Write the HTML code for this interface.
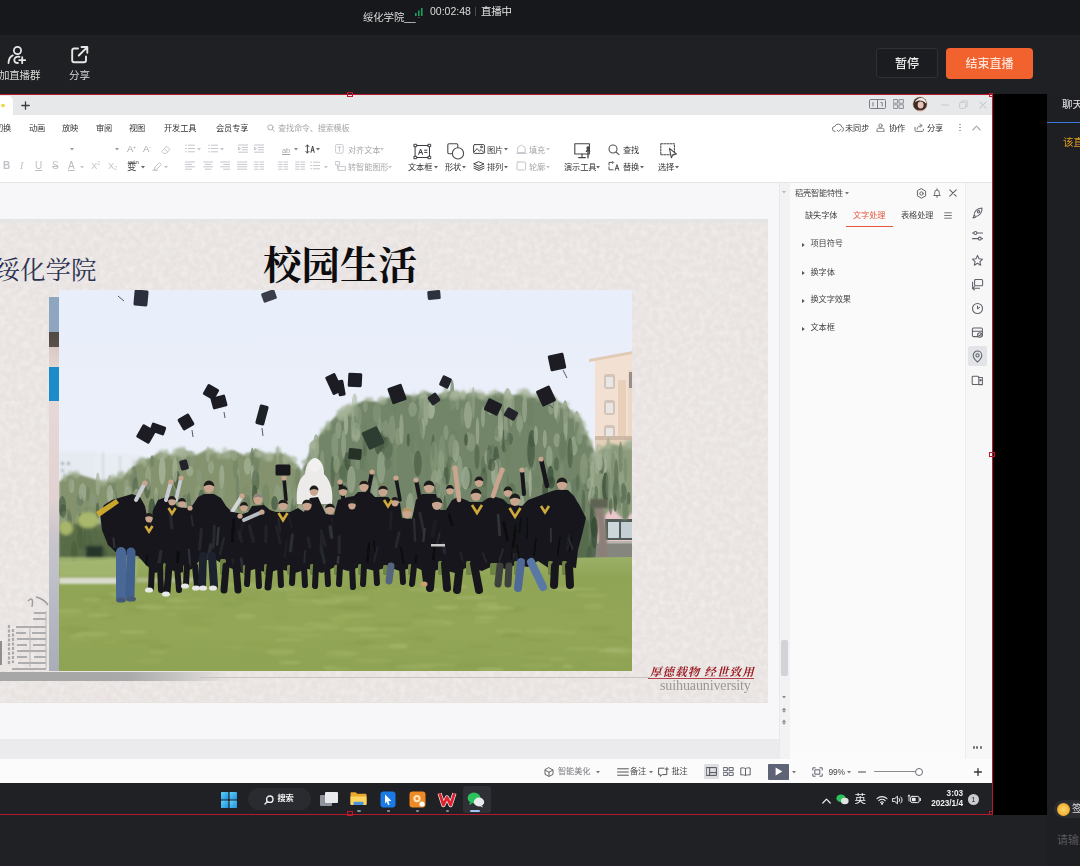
<!DOCTYPE html>
<html lang="zh-CN">
<head>
<meta charset="utf-8">
<title>直播中</title>
<style>
*{box-sizing:border-box;margin:0;padding:0}
html,body{width:1080px;height:866px;overflow:hidden;background:#1f2023;}
body{position:relative;font-family:"Liberation Sans","Noto Sans CJK SC",sans-serif;color:#e8e8e8;-webkit-font-smoothing:antialiased}
.abs{position:absolute}
.t{position:absolute;white-space:nowrap;line-height:1}
.soft{filter:blur(.45px)}
/* ===== live app chrome ===== */
#topband{left:0;top:0;width:1080px;height:35px;background:#17181b}
#toolbar{left:0;top:35px;width:1080px;height:59px;background:#1f2023}
#rightblack{left:993px;top:94px;width:54px;height:721px;background:#000}
#chat{left:1047px;top:94px;width:33px;height:772px;background:#1e1f22}
#bottomband{left:0;top:815px;width:1047px;height:51px;background:#202124}
.btn{position:absolute;top:49px;height:30px;border-radius:3px;font-size:12px;line-height:30px;text-align:center}
/* ===== shared window (page coordinates) ===== */
#win{left:0;top:0;width:992px;height:814px;overflow:hidden}
#win .t{color:#333}
#win{filter:blur(.45px)}
#winbg{left:0;top:95px;width:992px;height:720px;background:#fff}
#tabstrip{left:0;top:95px;width:992px;height:20px;background:#e7e8ea}
#work{left:0;top:183px;width:790px;height:556px;background:#f7f7f9}
#notes{left:0;top:739px;width:790px;height:20px;background:#ebebed}
#slide{left:0;top:219px;width:768px;height:484px;background:#e8e3e1;overflow:hidden}
#side{left:790px;top:183px;width:175px;height:576px;background:#fafafb}
#iconstrip{left:965px;top:183px;width:27px;height:576px;background:#f7f7f8;border-left:1px solid #ececee}
#status{left:0;top:759px;width:992px;height:24px;background:#fbfbfc}
#taskbar{left:0;top:783px;width:992px;height:31px;background:#202125}
.redh{position:absolute;height:1px;background:#b51a2c}
.redv{position:absolute;width:1px;background:#b51a2c}
.hd{width:6px;height:5px;border:1px solid #c4162b;background:transparent}
.r8{font-size:8.2px;color:#333;letter-spacing:-.1px}
#win .g8{font-size:8.2px;color:#a8a8ac;letter-spacing:-.1px}
.ic{position:absolute;overflow:visible}

</style>
</head>
<body>
<div id="topband" class="abs"></div>
<div id="toolbar" class="abs"></div>
<div id="bottomband" class="abs"></div>
<div id="rightblack" class="abs"></div>
<div id="chat" class="abs"></div>

<div id="win" class="abs">
  <div id="winbg" class="abs"></div>
  <div id="tabstrip" class="abs"></div>
  <div class="abs" style="left:0;top:96px;width:13px;height:19px;background:#fff;border-radius:0 5px 0 0"></div>
<div class="abs" style="left:1px;top:103.5px;width:3.5px;height:3.5px;border-radius:50%;background:#e9d84a"></div>
<svg class="ic soft" style="left:20.5px;top:100.5px" width="9" height="9" viewBox="0 0 9 9" fill="none" stroke="#3a3a3c" stroke-width="1.3" stroke-linecap="round" stroke-linejoin="round" ><path d="M4.5 .8v7.4M.8 4.5h7.4"/></svg>
<svg class="ic soft" style="left:869px;top:99px" width="17" height="10" viewBox="0 0 17 10" fill="none" stroke="#7a7d86" stroke-width="1" stroke-linecap="round" stroke-linejoin="round" ><rect x=".5" y=".5" width="16" height="9" rx="1"/><path d="M8.5 1v8M4 3.5v3.5M12 3.5h1.2v3.5"/></svg>
<svg class="ic soft" style="left:893px;top:99px" width="11" height="10" viewBox="0 0 11 10" fill="none" stroke="#8a8d96" stroke-width="1" stroke-linecap="round" stroke-linejoin="round" ><rect x=".6" y=".6" width="4" height="3.6"/><rect x="6.4" y=".6" width="4" height="3.6"/><rect x=".6" y="5.8" width="4" height="3.6"/><rect x="6.4" y="5.8" width="4" height="3.6"/></svg>
<svg class="ic soft" style="left:912.3px;top:95.5px" width="16" height="16" viewBox="0 0 16 16"><circle cx="8" cy="8" r="7.6" fill="#d8c3a8"/><circle cx="8" cy="8" r="6.8" fill="#3a2b28"/><path d="M3 6.2C4 2.6 8 1 11.4 2.4c2 1 3 3 2.6 5-2-2.4-5-3.4-8.4-2.6z" fill="#f3eeee"/><ellipse cx="8.6" cy="9" rx="3" ry="3.4" fill="#e9c3b4"/><path d="M6 13.4q2.6 1.4 5.2 0l-.6 1.4q-2 .8-4 0z" fill="#c98e8a"/></svg>
<svg class="ic soft" style="left:941px;top:104px" width="8" height="2" viewBox="0 0 8 2" fill="none" stroke="#c9cacf" stroke-width="1.1" stroke-linecap="round" stroke-linejoin="round" ><path d="M.5 1h7"/></svg>
<svg class="ic soft" style="left:959px;top:100px" width="9" height="9" viewBox="0 0 9 9" fill="none" stroke="#c9cacf" stroke-width="1" stroke-linecap="round" stroke-linejoin="round" ><rect x=".6" y="2.4" width="6" height="6" rx="1"/><path d="M2.6 2.2V.9h5.6v5.6H7"/></svg>
<svg class="ic soft" style="left:979px;top:100.5px" width="8" height="8" viewBox="0 0 8 8" fill="none" stroke="#c9cacf" stroke-width="1.1" stroke-linecap="round" stroke-linejoin="round" ><path d="M.8 .8l6.4 6.4M7.2 .8.8 7.2"/></svg>
<div class="t soft r8" style="left:-5px;top:125.0px;">切换</div>
<div class="t soft r8" style="left:29px;top:125.0px;">动画</div>
<div class="t soft r8" style="left:62px;top:125.0px;">放映</div>
<div class="t soft r8" style="left:96px;top:125.0px;">审阅</div>
<div class="t soft r8" style="left:129px;top:125.0px;">视图</div>
<div class="t soft r8" style="left:164px;top:125.0px;">开发工具</div>
<div class="t soft r8" style="left:216px;top:125.0px;">会员专享</div>
<svg class="ic soft" style="left:267px;top:123.5px" width="8" height="8" viewBox="0 0 8 8" fill="none" stroke="#b0b0b4" stroke-width="1" stroke-linecap="round" stroke-linejoin="round" ><circle cx="3.4" cy="3.4" r="2.6"/><path d="M5.4 5.4 7.4 7.4"/></svg>
<div class="t soft g8" style="left:278px;top:125.0px;letter-spacing:-.25px">查找命令、搜索模板</div>
<svg class="ic soft" style="left:832px;top:122.5px" width="12" height="10" viewBox="0 0 12 10" fill="none" stroke="#777" stroke-width="1" stroke-linecap="round" stroke-linejoin="round" ><path d="M3.2 8.5a2.6 2.6 0 0 1-.3-5.2 3.6 3.6 0 0 1 6.9.9 2.2 2.2 0 0 1 .2 4.3"/><path d="M5.2 7.2l1.4 1.4 2.4-2.4"/></svg>
<div class="t soft r8" style="left:845px;top:125.0px;">未同步</div>
<svg class="ic soft" style="left:876px;top:123px" width="9" height="9" viewBox="0 0 9 9" fill="none" stroke="#777" stroke-width="1" stroke-linecap="round" stroke-linejoin="round" ><circle cx="4.5" cy="2.6" r="1.7"/><path d="M1 8.4V6.6c0-.8.7-1.4 1.5-1.4h4c.8 0 1.5.6 1.5 1.4v1.8z"/></svg>
<div class="t soft r8" style="left:889px;top:125.0px;">协作</div>
<svg class="ic soft" style="left:914px;top:123px" width="11" height="9" viewBox="0 0 11 9" fill="none" stroke="#777" stroke-width="1" stroke-linecap="round" stroke-linejoin="round" ><path d="M1 4.2v3.2c0 .6.5 1 1 1h6.4c.6 0 1-.4 1-1V6.2"/><path d="M3 6.2c.4-2.4 2-3.6 4.6-3.6M6.2 .8l1.8 1.8-1.8 1.8"/></svg>
<div class="t soft r8" style="left:927px;top:125.0px;">分享</div>
<div class="abs" style="left:959.3px;top:123.6px;width:1.4px;height:1.4px;border-radius:50%;background:#9a9aa0"></div>
<div class="abs" style="left:959.3px;top:126.8px;width:1.4px;height:1.4px;border-radius:50%;background:#9a9aa0"></div>
<div class="abs" style="left:959.3px;top:130.0px;width:1.4px;height:1.4px;border-radius:50%;background:#9a9aa0"></div>
<svg class="ic soft" style="left:972px;top:125px" width="9" height="6" viewBox="0 0 9 6" fill="none" stroke="#aaaab0" stroke-width="1.1" stroke-linecap="round" stroke-linejoin="round" ><path d="M.8 5 4.5 1.2 8.2 5"/></svg>
<svg class="ic" style="left:70px;top:148.4px" width="4" height="3" viewBox="0 0 4 3"><path d="M0 0h4L2 2.6z" fill="#999"/></svg>
<svg class="ic" style="left:115px;top:148.4px" width="4" height="3" viewBox="0 0 4 3"><path d="M0 0h4L2 2.6z" fill="#999"/></svg>
<div class="t soft g8" style="left:127px;top:146.5px;font-size:9.5px;top:143.5px">A<sup style="font-size:5px;vertical-align:3px">+</sup></div>
<div class="t soft g8" style="left:143px;top:146.5px;font-size:9.5px;top:143.5px">A<sup style="font-size:5px;vertical-align:3px">-</sup></div>
<svg class="ic soft" style="left:161px;top:144.5px" width="10" height="9" viewBox="0 0 10 9" fill="none" stroke="#c4c6cc" stroke-width="1" stroke-linecap="round" stroke-linejoin="round" ><path d="M1 6.2 5.6 1.2 9 4.4 5.2 8.4H3z"/><path d="M3.4 3.8 6.8 7"/></svg>
<svg class="ic soft" style="left:185px;top:144.4px" width="10.4" height="9.4" viewBox="0 0 10.4 9.4" fill="none" stroke="#c4c6cc" stroke-width="1" stroke-linecap="round" stroke-linejoin="round" ><path d="M3.4 1.2h6.2M3.4 4.5h6.2M3.4 7.8h6.2"/><path d="M.6 1.2h.9M.6 4.5h.9M.6 7.8h.9"/></svg>
<svg class="ic" style="left:197px;top:148.4px" width="4" height="3" viewBox="0 0 4 3"><path d="M0 0h4L2 2.6z" fill="#c4c6cc"/></svg>
<svg class="ic soft" style="left:208px;top:144.4px" width="10.4" height="9.4" viewBox="0 0 10.4 9.4" fill="none" stroke="#c4c6cc" stroke-width="1" stroke-linecap="round" stroke-linejoin="round" ><path d="M3.4 1.2h6.2M3.4 4.5h6.2M3.4 7.8h6.2"/><path d="M.6 1.2h.9M.6 4.5h.9M.6 7.8h.9"/></svg>
<svg class="ic" style="left:220px;top:148.4px" width="4" height="3" viewBox="0 0 4 3"><path d="M0 0h4L2 2.6z" fill="#c4c6cc"/></svg>
<svg class="ic soft" style="left:238px;top:144.4px" width="10.4" height="9.4" viewBox="0 0 10.4 9.4" fill="none" stroke="#c4c6cc" stroke-width="1" stroke-linecap="round" stroke-linejoin="round" ><path d="M.6 1h9M4.2 3.4h5.4M4.2 5.8h5.4M.6 8.2h9"/><path d="M.8 3.4l1.8 1.2-1.8 1.2z"/></svg>
<svg class="ic soft" style="left:254px;top:144.4px" width="10.4" height="9.4" viewBox="0 0 10.4 9.4" fill="none" stroke="#c4c6cc" stroke-width="1" stroke-linecap="round" stroke-linejoin="round" ><path d="M.6 1h9M4.2 3.4h5.4M4.2 5.8h5.4M.6 8.2h9"/><path d="M.8 3.4l1.8 1.2-1.8 1.2z"/></svg>
<div class="t soft g8" style="left:282px;top:146.5px;font-size:7.5px;text-decoration:underline">ab</div>
<svg class="ic" style="left:294px;top:148.4px" width="4" height="3" viewBox="0 0 4 3"><path d="M0 0h4L2 2.6z" fill="#888"/></svg>
<svg class="ic soft" style="left:305px;top:144px" width="10" height="10" viewBox="0 0 10 10" fill="none" stroke="#444" stroke-width="1" stroke-linecap="round" stroke-linejoin="round" ><path d="M2.4 1v8M.8 2.6 2.4 1 4 2.6M.8 7.4 2.4 9 4 7.4"/><path d="M6 8.4 7.6 2l1.6 6.4M6.6 6.2h2"/></svg>
<svg class="ic" style="left:316px;top:148.4px" width="4" height="3" viewBox="0 0 4 3"><path d="M0 0h4L2 2.6z" fill="#666"/></svg>
<svg class="ic soft" style="left:335px;top:144px" width="9" height="10" viewBox="0 0 9 10" fill="none" stroke="#c4c6cc" stroke-width="1" stroke-linecap="round" stroke-linejoin="round" ><rect x=".6" y=".6" width="7.6" height="8.6" rx="1" stroke-dasharray="1.6 1"/><path d="M2.8 3.2h3.2M4.4 3.2v4"/></svg>
<div class="t soft g8" style="left:348px;top:146.5px;">对齐文本</div>
<svg class="ic" style="left:380px;top:148.4px" width="4" height="3" viewBox="0 0 4 3"><path d="M0 0h4L2 2.6z" fill="#c4c6cc"/></svg>
<div class="t soft g8" style="left:3px;top:164.4px;font-size:10px;top:161px;font-weight:700;color:#bfc1c7">B</div>
<div class="t soft g8" style="left:20px;top:164.4px;font-size:10px;top:161px;color:#bfc1c7;font-family:'Liberation Serif',serif"><i>I</i></div>
<div class="t soft g8" style="left:35px;top:164.4px;font-size:10px;top:161px;color:#bfc1c7"><u>U</u></div>
<div class="t soft g8" style="left:52px;top:164.4px;font-size:10px;top:161px;color:#bfc1c7"><s>S</s></div>
<div class="t soft g8" style="left:68px;top:164.4px;font-size:10px;top:161px;color:#b7b9bf"><u>A</u></div>
<svg class="ic" style="left:80px;top:165.7px" width="4" height="3" viewBox="0 0 4 3"><path d="M0 0h4L2 2.6z" fill="#c4c6cc"/></svg>
<div class="t soft g8" style="left:91px;top:164.4px;font-size:9.5px;top:161px;color:#c4c6cc">X<sup style="font-size:5px;vertical-align:4px">2</sup></div>
<div class="t soft g8" style="left:108px;top:164.4px;font-size:9.5px;top:161px;color:#c4c6cc">X<sub style="font-size:5px;vertical-align:-1px">2</sub></div>
<div class="t soft r8" style="left:127px;top:164.4px;font-size:9.5px;top:161.5px;color:#444"><span style="font-size:6px;position:absolute;top:-3px;left:1px">wén</span>变</div>
<svg class="ic" style="left:141px;top:165.7px" width="4" height="3" viewBox="0 0 4 3"><path d="M0 0h4L2 2.6z" fill="#666"/></svg>
<svg class="ic soft" style="left:152px;top:161px" width="11" height="10" viewBox="0 0 11 10" fill="none" stroke="#c4c6cc" stroke-width="1" stroke-linecap="round" stroke-linejoin="round" ><path d="M2 8.6 3 6l4.4-4.6 2 2L5 8z"/><path d="M.8 9.4h4.6"/></svg>
<svg class="ic" style="left:164px;top:165.7px" width="4" height="3" viewBox="0 0 4 3"><path d="M0 0h4L2 2.6z" fill="#c4c6cc"/></svg>
<svg class="ic soft" style="left:185px;top:161.4px" width="10.4" height="9.4" viewBox="0 0 10.4 9.4" fill="none" stroke="#c4c6cc" stroke-width="1" stroke-linecap="round" stroke-linejoin="round" ><path d="M.6 1h9M.6 3.4h6M.6 5.8h9M.6 8.2h6"/></svg>
<svg class="ic soft" style="left:203px;top:161.4px" width="10.4" height="9.4" viewBox="0 0 10.4 9.4" fill="none" stroke="#c4c6cc" stroke-width="1" stroke-linecap="round" stroke-linejoin="round" ><path d="M.6 1h9M2.2 3.4h5.8M.6 5.8h9M2.2 8.2h5.8"/></svg>
<svg class="ic soft" style="left:220px;top:161.4px" width="10.4" height="9.4" viewBox="0 0 10.4 9.4" fill="none" stroke="#c4c6cc" stroke-width="1" stroke-linecap="round" stroke-linejoin="round" ><path d="M.6 1h9M3.6 3.4h6M.6 5.8h9M3.6 8.2h6"/></svg>
<svg class="ic soft" style="left:237px;top:161.4px" width="10.4" height="9.4" viewBox="0 0 10.4 9.4" fill="none" stroke="#c4c6cc" stroke-width="1" stroke-linecap="round" stroke-linejoin="round" ><path d="M.6 1h9M.6 3.4h9M.6 5.8h9M.6 8.2h9"/></svg>
<svg class="ic soft" style="left:254px;top:161.4px" width="10.4" height="9.4" viewBox="0 0 10.4 9.4" fill="none" stroke="#c4c6cc" stroke-width="1" stroke-linecap="round" stroke-linejoin="round" ><path d="M.6 1h3.4M6 1h3.6M.6 3.4h3.4M6 3.4h3.6M.6 5.8h3.4M6 5.8h3.6M.6 8.2h3.4M6 8.2h3.6"/></svg>
<svg class="ic soft" style="left:278px;top:161.4px" width="10.4" height="9.4" viewBox="0 0 10.4 9.4" fill="none" stroke="#c4c6cc" stroke-width="1" stroke-linecap="round" stroke-linejoin="round" ><path d="M.6 1h3.4M6 1h3.6M.6 3.4h3.4M6 3.4h3.6M.6 5.8h3.4M6 5.8h3.6M.6 8.2h3.4M6 8.2h3.6"/></svg>
<svg class="ic soft" style="left:295px;top:161.4px" width="10.4" height="9.4" viewBox="0 0 10.4 9.4" fill="none" stroke="#c4c6cc" stroke-width="1" stroke-linecap="round" stroke-linejoin="round" ><path d="M.6 1h3.4M6 1h3.6M.6 3.4h3.4M6 3.4h3.6M.6 5.8h3.4M6 5.8h3.6M.6 8.2h3.4M6 8.2h3.6"/></svg>
<svg class="ic soft" style="left:310px;top:161.4px" width="10.4" height="9.4" viewBox="0 0 10.4 9.4" fill="none" stroke="#c4c6cc" stroke-width="1" stroke-linecap="round" stroke-linejoin="round" ><path d="M3.4 1.2h6.2M3.4 4.5h6.2M3.4 7.8h6.2"/><path d="M.6 1.2h.9M.6 4.5h.9M.6 7.8h.9"/></svg>
<svg class="ic" style="left:324px;top:165.7px" width="4" height="3" viewBox="0 0 4 3"><path d="M0 0h4L2 2.6z" fill="#c4c6cc"/></svg>
<svg class="ic soft" style="left:335px;top:161px" width="11" height="10" viewBox="0 0 11 10" fill="none" stroke="#c4c6cc" stroke-width="1" stroke-linecap="round" stroke-linejoin="round" ><rect x=".6" y=".6" width="4" height="3.4"/><rect x="3.4" y="5.6" width="7" height="3.8"/><path d="M2.6 4v3.4h.8"/></svg>
<div class="t soft g8" style="left:348px;top:164.4px;">转智能图形</div>
<svg class="ic" style="left:388px;top:165.7px" width="4" height="3" viewBox="0 0 4 3"><path d="M0 0h4L2 2.6z" fill="#c4c6cc"/></svg>
<svg class="ic soft" style="left:413.6px;top:143.8px" width="17" height="15" viewBox="0 0 17 15" fill="none" stroke="#3c3c40" stroke-width="1" stroke-linecap="round" stroke-linejoin="round" ><rect x="1.5" y="1.5" width="14" height="12"/><rect x=".3" y=".3" width="2.4" height="2.4" fill="#fff"/><rect x="14.3" y=".3" width="2.4" height="2.4" fill="#fff"/><rect x=".3" y="12.3" width="2.4" height="2.4" fill="#fff"/><rect x="14.3" y="12.3" width="2.4" height="2.4" fill="#fff"/><path d="M4.6 10.4 6.6 5l2 5.4M5.3 8.6h2.6M10.6 6.2h2.4M10.6 8.4h2.4"/></svg>
<div class="t soft r8" style="left:408px;top:164.4px;">文本框</div>
<svg class="ic" style="left:433.5px;top:165.7px" width="4" height="3" viewBox="0 0 4 3"><path d="M0 0h4L2 2.6z" fill="#666"/></svg>
<svg class="ic soft" style="left:447px;top:143px" width="18" height="17" viewBox="0 0 18 17" fill="none" stroke="#4a4a4e" stroke-width="1.1" stroke-linecap="round" stroke-linejoin="round" ><rect x=".8" y=".8" width="10" height="10" rx="1.2"/><circle cx="11" cy="10.4" r="5.6" fill="#fff"/></svg>
<div class="t soft r8" style="left:445px;top:164.4px;">形状</div>
<svg class="ic" style="left:461.5px;top:165.7px" width="4" height="3" viewBox="0 0 4 3"><path d="M0 0h4L2 2.6z" fill="#666"/></svg>
<svg class="ic soft" style="left:473px;top:144px" width="12" height="10" viewBox="0 0 12 10" fill="none" stroke="#444" stroke-width="1" stroke-linecap="round" stroke-linejoin="round" ><rect x=".6" y=".6" width="10.8" height="8.8" rx="1"/><path d="M1 8 4 4.6l2.4 2.6L8 5.6 11 8.6"/><circle cx="8.4" cy="3" r=".9"/></svg>
<div class="t soft r8" style="left:487px;top:146.5px;">图片</div>
<svg class="ic" style="left:504px;top:148.4px" width="4" height="3" viewBox="0 0 4 3"><path d="M0 0h4L2 2.6z" fill="#666"/></svg>
<svg class="ic soft" style="left:473px;top:161px" width="12" height="10" viewBox="0 0 12 10" fill="none" stroke="#444" stroke-width="1" stroke-linecap="round" stroke-linejoin="round" ><path d="M6 .8 11 3 6 5.2 1 3z"/><path d="M1 5.2 6 7.4l5-2.2M1 7.2 6 9.4l5-2.2"/></svg>
<div class="t soft r8" style="left:487px;top:164.4px;">排列</div>
<svg class="ic" style="left:504px;top:165.7px" width="4" height="3" viewBox="0 0 4 3"><path d="M0 0h4L2 2.6z" fill="#666"/></svg>
<svg class="ic soft" style="left:516px;top:144px" width="11" height="10" viewBox="0 0 11 10" fill="none" stroke="#c4c6cc" stroke-width="1" stroke-linecap="round" stroke-linejoin="round" ><path d="M1.6 8.2V3.6L5.4 1l3.8 2.6v4.6z"/><path d="M.6 9.4h9.8"/></svg>
<div class="t soft g8" style="left:529px;top:146.5px;">填充</div>
<svg class="ic" style="left:546px;top:148.4px" width="4" height="3" viewBox="0 0 4 3"><path d="M0 0h4L2 2.6z" fill="#c4c6cc"/></svg>
<svg class="ic soft" style="left:516px;top:161px" width="11" height="10" viewBox="0 0 11 10" fill="none" stroke="#c4c6cc" stroke-width="1" stroke-linecap="round" stroke-linejoin="round" ><rect x="1" y="1" width="8.6" height="8" rx="1"/></svg>
<div class="t soft g8" style="left:529px;top:164.4px;">轮廓</div>
<svg class="ic" style="left:546px;top:165.7px" width="4" height="3" viewBox="0 0 4 3"><path d="M0 0h4L2 2.6z" fill="#c4c6cc"/></svg>
<svg class="ic soft" style="left:574px;top:143px" width="19" height="16" viewBox="0 0 19 16" fill="none" stroke="#444" stroke-width="1.1" stroke-linecap="round" stroke-linejoin="round" ><rect x=".8" y=".8" width="14.6" height="10.2"/><path d="M8 11v3M4.6 14.6h6.8"/><path d="M14 14.8V6.4M14 6.4l-1.6 2M14 6.4l1.6 2" stroke-width="1.3"/><circle cx="14" cy="5" r="1.1" fill="#444"/></svg>
<div class="t soft r8" style="left:564px;top:164.4px;">演示工具</div>
<svg class="ic" style="left:596px;top:165.7px" width="4" height="3" viewBox="0 0 4 3"><path d="M0 0h4L2 2.6z" fill="#666"/></svg>
<svg class="ic soft" style="left:608px;top:143.5px" width="12" height="11" viewBox="0 0 12 11" fill="none" stroke="#555" stroke-width="1.1" stroke-linecap="round" stroke-linejoin="round" ><circle cx="5" cy="5" r="4"/><path d="M8 8 11 10.6"/></svg>
<div class="t soft r8" style="left:623px;top:146.5px;">查找</div>
<svg class="ic soft" style="left:608px;top:161px" width="12" height="10" viewBox="0 0 12 10" fill="none" stroke="#555" stroke-width="1" stroke-linecap="round" stroke-linejoin="round" ><path d="M1 4V1.4h3.4M1 6v2.8h4"/><path d="M7.2 9.2 9 3.6l1.8 5.6M7.8 7.4h2.4"/><path d="M4.6 .4 5.6 1.4 4.6 2.4"/></svg>
<div class="t soft r8" style="left:623px;top:164.4px;">替换</div>
<svg class="ic" style="left:640px;top:165.7px" width="4" height="3" viewBox="0 0 4 3"><path d="M0 0h4L2 2.6z" fill="#666"/></svg>
<svg class="ic soft" style="left:660px;top:143px" width="18" height="16" viewBox="0 0 18 16" fill="none" stroke="#4a4a4e" stroke-width="1.1" stroke-linecap="round" stroke-linejoin="round" ><rect x=".8" y=".8" width="13.6" height="11" stroke-dasharray="1.8 1.2"/><path d="M9.4 5.4 16.4 11l-3.4.6-1.6 3.2z" fill="#fff"/></svg>
<div class="t soft r8" style="left:658px;top:164.4px;">选择</div>
<svg class="ic" style="left:675px;top:165.7px" width="4" height="3" viewBox="0 0 4 3"><path d="M0 0h4L2 2.6z" fill="#666"/></svg>
<div class="abs" style="left:0;top:182px;width:992px;height:1px;background:#e6e6e9"></div>
  <div id="work" class="abs"></div>
  <div id="notes" class="abs"></div>
  <div id="slide" class="abs"><svg class="abs" style="left:0;top:0" width="768" height="483" viewBox="0 0 768 483"><defs><filter id="paper" x="0" y="0" width="100%" height="100%"><feTurbulence type="fractalNoise" baseFrequency=".17" numOctaves="2" seed="3" result="n"/><feColorMatrix in="n" type="matrix" values="0 0 0 0 .955  0 0 0 0 .932  0 0 0 0 .928  0 0 0 1.6 -.55"/></filter><linearGradient id="sfade" x1="0" y1="0" x2="0" y2="1"><stop offset="0" stop-color="#e2e4e6"/><stop offset="1" stop-color="#e2e4e6" stop-opacity="0"/></linearGradient></defs><rect width="768" height="483" filter="url(#paper)" opacity=".55"/><rect width="768" height="5" fill="url(#sfade)"/></svg>
<div class="t" style="left:-5.5px;top:38.5px;font-family:'Liberation Serif','Noto Serif CJK SC',serif;font-size:25.5px;color:#2c3352;letter-spacing:0px">绥化学院</div>
<div class="t" style="left:263px;top:28px;font-family:'Liberation Serif','Noto Serif CJK SC',serif;font-weight:700;font-size:38.5px;color:#0d0d0f;letter-spacing:0px">校园生活</div>
<!-- left colour strip -->
<div class="abs" style="left:49px;top:78px;width:10px;height:374px;background:linear-gradient(#8ea6c0 0,#8ea6c0 35px,#4f4a44 35px,#5c5148 50px,#d9c9c4 50px,#e4d6d2 70px,#1b8bc9 70px,#1b8bc9 104px,#e6d8d6 104px,#e2d3d2 200px,#c9c6cc 240px,#b9bcc6 300px,#a9adb8 374px)"></div>
<svg class="abs" style="left:59px;top:71px" width="573" height="381" viewBox="0 0 573 381">
<defs>
<linearGradient id="sky" x1="0" y1="0" x2="0" y2="1"><stop offset="0" stop-color="#e8eefa"/><stop offset=".5" stop-color="#ecf0f9"/><stop offset="1" stop-color="#f1f3f8"/></linearGradient>
<linearGradient id="grass" x1="0" y1="0" x2="0" y2="1"><stop offset="0" stop-color="#9bb068"/><stop offset=".18" stop-color="#90a455"/><stop offset=".6" stop-color="#93a657"/><stop offset="1" stop-color="#8fa354"/></linearGradient>
<filter id="b1" x="-10%" y="-10%" width="120%" height="120%"><feGaussianBlur stdDeviation="1"/></filter>
<filter id="b2" x="-10%" y="-10%" width="120%" height="120%"><feGaussianBlur stdDeviation="1.8"/></filter>
<filter id="b05" x="-10%" y="-10%" width="120%" height="120%"><feGaussianBlur stdDeviation=".55"/></filter>
<filter id="b07" x="-10%" y="-10%" width="120%" height="120%"><feGaussianBlur stdDeviation=".75"/></filter>
<clipPath id="pc"><rect x="0" y="0" width="573" height="381"/></clipPath>
</defs>
<g clip-path="url(#pc)">
<rect width="573" height="381" fill="url(#sky)"/>
<g filter="url(#b1)"><rect x="0" y="162" width="38" height="36" fill="#e6eaf1"/><rect x="34" y="164" width="44" height="32" fill="#e8ecf3"/>
<rect x="2" y="172" width="3" height="3" fill="#a3aebb"/><rect x="8" y="172" width="3" height="3" fill="#a3aebb"/><rect x="2" y="179" width="3" height="3" fill="#b3bcc6"/>
<path d="M44,188v-26M61,180v-14M74,180v-10" stroke="#c2c8cf" stroke-width="1"/></g>
<g filter="url(#b05)"><polygon points="531,70 574,62 574,182 536,182 536,72" fill="#f2e1d2" />
<polygon points="530,69 574,61 574,64 530,72" fill="#e2cbb6" />
<rect x="545" y="84" width="11" height="15" rx="3" fill="#d3c3b8"/><rect x="547" y="87" width="7" height="10" fill="#e9e6e6"/>
<rect x="545" y="110" width="11" height="15" rx="3" fill="#d3c3b8"/><rect x="547" y="113" width="7" height="10" fill="#e9e6e6"/>
<rect x="545" y="135" width="11" height="15" rx="3" fill="#d3c3b8"/><rect x="547" y="138" width="7" height="10" fill="#e9e6e6"/>
<rect x="559" y="90" width="8" height="58" fill="#e8d0ba"/><rect x="569" y="80" width="5" height="70" fill="#ecd8c6"/><rect x="570" y="82" width="4" height="16" fill="#9a8f88"/>
<rect x="536" y="146" width="40" height="4" fill="#cdb9a4"/><rect x="536" y="150" width="40" height="30" fill="#e3d0b8"/></g>
<g filter="url(#b05)"><rect x="507" y="210" width="70" height="60" fill="#e9c7cb"/>
<rect x="512" y="232" width="15" height="18" fill="#56625f"/><rect x="514" y="234" width="5" height="14" fill="#d5e0e4"/><rect x="520.5" y="234" width="5" height="14" fill="#cdd9de"/>
<rect x="546" y="229" width="28" height="21" fill="#4f5b58"/><rect x="549" y="232" width="11" height="16" fill="#ccd7db"/><rect x="562" y="232" width="11" height="16" fill="#c3cfd3"/>
<rect x="507" y="253" width="70" height="15" fill="#85877f"/><rect x="507" y="251" width="70" height="2.5" fill="#b9b5ae"/></g>
<g filter="url(#b1)">
<polygon points="0,192 7,186 15,183 25,186 35,189 45,192 55,188 65,185 73,178 81,170 91,168 101,162 113,165 125,160 137,165 149,159 161,164 173,160 185,165 197,160 209,165 221,162 231,168 239,176 245,188 245,285 0,285" fill="#84936e" />
<polygon points="239,190 244,178 249,166 255,154 261,144 269,134 277,126 287,120 297,114 307,110 319,112 331,107 343,104 355,106 367,102 379,105 391,101 403,105 415,102 427,106 439,102 451,106 463,103 475,107 487,105 497,110 507,116 515,124 523,134 529,146 535,160 539,176 539,230 531,285 239,285" fill="#728568" />
<polygon points="529,180 535,166 543,158 553,154 563,156 574,152 574,222 565,230 553,218 545,226 537,210 531,202" fill="#8c9c7c" />
</g>
<g filter="url(#b07)"><ellipse cx="110.9" cy="224.9" rx="3.8" ry="9.2" fill="#8e9f80" opacity="0.78"/><ellipse cx="47.1" cy="255.1" rx="2.7" ry="10.5" fill="#5a6e52" opacity="0.44"/><ellipse cx="74.7" cy="187.5" rx="3.5" ry="11.2" fill="#6e8264" opacity="0.67"/><ellipse cx="97.3" cy="213.8" rx="3.3" ry="10.9" fill="#3a4e38" opacity="0.41"/><ellipse cx="129.4" cy="171.1" rx="2.0" ry="7.2" fill="#6e8264" opacity="0.75"/><ellipse cx="80.3" cy="230.6" rx="2.0" ry="7.1" fill="#465a42" opacity="0.62"/><ellipse cx="162.0" cy="213.9" rx="2.2" ry="14.0" fill="#8a9a7e" opacity="0.72"/><ellipse cx="77.6" cy="197.9" rx="2.2" ry="5.6" fill="#8a9a7e" opacity="0.58"/><ellipse cx="206.7" cy="206.8" rx="3.9" ry="12.6" fill="#6e8264" opacity="0.50"/><ellipse cx="226.3" cy="173.5" rx="2.4" ry="11.4" fill="#adb9a0" opacity="0.43"/><ellipse cx="154.0" cy="246.5" rx="2.2" ry="5.8" fill="#3a4e38" opacity="0.41"/><ellipse cx="100.6" cy="261.9" rx="1.8" ry="11.4" fill="#465a42" opacity="0.43"/><ellipse cx="194.7" cy="182.8" rx="2.9" ry="9.0" fill="#a0ae92" opacity="0.84"/><ellipse cx="188.0" cy="210.0" rx="2.5" ry="8.6" fill="#98a78c" opacity="0.40"/><ellipse cx="211.0" cy="267.4" rx="3.0" ry="14.0" fill="#465a42" opacity="0.49"/><ellipse cx="96.8" cy="255.1" rx="3.1" ry="5.9" fill="#5a6e52" opacity="0.50"/><ellipse cx="63.8" cy="251.4" rx="2.3" ry="7.7" fill="#465a42" opacity="0.43"/><ellipse cx="51.7" cy="241.8" rx="1.5" ry="8.3" fill="#3a4e38" opacity="0.60"/><ellipse cx="234.1" cy="220.5" rx="2.9" ry="12.8" fill="#5a6e52" opacity="0.68"/><ellipse cx="76.5" cy="198.6" rx="3.0" ry="11.5" fill="#5a6e52" opacity="0.73"/><ellipse cx="229.5" cy="189.7" rx="3.9" ry="12.9" fill="#8a9a7e" opacity="0.44"/><ellipse cx="12.5" cy="196.0" rx="2.8" ry="7.3" fill="#adb9a0" opacity="0.52"/><ellipse cx="201.2" cy="227.5" rx="2.2" ry="6.6" fill="#8a9a7e" opacity="0.46"/><ellipse cx="117.5" cy="234.0" rx="3.0" ry="5.7" fill="#98a78c" opacity="0.81"/><ellipse cx="50.6" cy="194.1" rx="2.2" ry="9.0" fill="#6e8264" opacity="0.42"/><ellipse cx="69.5" cy="229.7" rx="3.9" ry="5.8" fill="#5a6e52" opacity="0.80"/><ellipse cx="239.3" cy="239.0" rx="3.2" ry="10.3" fill="#5a6e52" opacity="0.67"/><ellipse cx="225.4" cy="216.2" rx="2.4" ry="7.8" fill="#6e8264" opacity="0.41"/><ellipse cx="155.6" cy="215.5" rx="3.3" ry="7.9" fill="#8a9a7e" opacity="0.43"/><ellipse cx="133.7" cy="242.8" rx="3.8" ry="11.6" fill="#6e8264" opacity="0.46"/><ellipse cx="235.1" cy="207.5" rx="1.7" ry="9.3" fill="#8a9a7e" opacity="0.79"/><ellipse cx="102.4" cy="248.1" rx="3.7" ry="10.2" fill="#324632" opacity="0.70"/><ellipse cx="93.1" cy="171.0" rx="1.7" ry="5.8" fill="#6e8264" opacity="0.85"/><ellipse cx="214.8" cy="241.9" rx="2.5" ry="11.6" fill="#324632" opacity="0.61"/><ellipse cx="113.4" cy="223.1" rx="2.8" ry="9.6" fill="#465a42" opacity="0.67"/><ellipse cx="117.9" cy="189.9" rx="3.2" ry="9.5" fill="#3a4e38" opacity="0.70"/><ellipse cx="119.2" cy="259.2" rx="2.4" ry="6.3" fill="#324632" opacity="0.49"/><ellipse cx="42.2" cy="262.9" rx="3.1" ry="9.0" fill="#5a6e52" opacity="0.55"/><ellipse cx="162.8" cy="187.0" rx="2.6" ry="12.3" fill="#a0ae92" opacity="0.80"/><ellipse cx="94.4" cy="227.9" rx="2.3" ry="6.2" fill="#60755a" opacity="0.56"/><ellipse cx="218.6" cy="169.8" rx="1.7" ry="13.8" fill="#a0ae92" opacity="0.45"/><ellipse cx="115.5" cy="262.3" rx="3.6" ry="8.4" fill="#324632" opacity="0.62"/><ellipse cx="77.6" cy="254.9" rx="4.0" ry="9.1" fill="#465a42" opacity="0.77"/><ellipse cx="68.6" cy="236.6" rx="3.2" ry="7.5" fill="#7c8e70" opacity="0.54"/><ellipse cx="193.3" cy="166.5" rx="1.8" ry="9.1" fill="#6e8264" opacity="0.75"/><ellipse cx="65.7" cy="251.8" rx="3.5" ry="13.9" fill="#465a42" opacity="0.60"/><ellipse cx="154.1" cy="233.5" rx="3.5" ry="13.6" fill="#98a78c" opacity="0.49"/><ellipse cx="116.5" cy="185.0" rx="1.5" ry="9.2" fill="#6e8264" opacity="0.48"/><ellipse cx="67.2" cy="215.1" rx="3.2" ry="9.7" fill="#3a4e38" opacity="0.85"/><ellipse cx="39.7" cy="258.4" rx="3.2" ry="7.0" fill="#60755a" opacity="0.82"/><ellipse cx="176.5" cy="178.2" rx="2.6" ry="10.6" fill="#6e8264" opacity="0.57"/><ellipse cx="139.2" cy="257.6" rx="3.5" ry="13.5" fill="#60755a" opacity="0.55"/><ellipse cx="239.7" cy="189.3" rx="3.7" ry="12.2" fill="#6e8264" opacity="0.50"/><ellipse cx="219.7" cy="268.0" rx="3.9" ry="9.8" fill="#3a4e38" opacity="0.52"/><ellipse cx="175.5" cy="165.7" rx="2.8" ry="5.3" fill="#98a78c" opacity="0.65"/><ellipse cx="187.7" cy="217.1" rx="1.6" ry="12.3" fill="#8a9a7e" opacity="0.59"/><ellipse cx="9.5" cy="231.7" rx="3.2" ry="13.2" fill="#60755a" opacity="0.47"/><ellipse cx="126.5" cy="240.6" rx="3.6" ry="11.2" fill="#60755a" opacity="0.66"/><ellipse cx="168.4" cy="244.5" rx="2.6" ry="10.0" fill="#6e8264" opacity="0.65"/><ellipse cx="40.9" cy="233.0" rx="3.8" ry="7.3" fill="#a4b298" opacity="0.83"/><ellipse cx="212.4" cy="229.8" rx="2.3" ry="6.3" fill="#8e9f80" opacity="0.64"/><ellipse cx="140.2" cy="187.2" rx="2.8" ry="9.5" fill="#8a9a7e" opacity="0.57"/><ellipse cx="131.8" cy="170.4" rx="3.8" ry="9.9" fill="#8a9a7e" opacity="0.45"/><ellipse cx="23.7" cy="202.2" rx="3.8" ry="9.1" fill="#adb9a0" opacity="0.52"/><ellipse cx="116.0" cy="179.9" rx="2.6" ry="12.3" fill="#adb9a0" opacity="0.64"/><ellipse cx="27.4" cy="223.4" rx="1.6" ry="7.3" fill="#6e8264" opacity="0.42"/><ellipse cx="38.8" cy="194.0" rx="2.2" ry="11.5" fill="#a0ae92" opacity="0.68"/><ellipse cx="26.5" cy="248.3" rx="1.8" ry="9.6" fill="#3a4e38" opacity="0.72"/><ellipse cx="171.4" cy="257.1" rx="1.6" ry="10.7" fill="#324632" opacity="0.68"/><ellipse cx="131.8" cy="255.8" rx="2.8" ry="7.0" fill="#5a6e52" opacity="0.78"/><ellipse cx="149.6" cy="254.6" rx="2.1" ry="11.7" fill="#3a4e38" opacity="0.81"/><ellipse cx="77.8" cy="205.8" rx="3.8" ry="7.0" fill="#98a78c" opacity="0.80"/><ellipse cx="33.5" cy="210.3" rx="3.3" ry="7.3" fill="#8a9a7e" opacity="0.60"/><ellipse cx="229.7" cy="224.4" rx="3.3" ry="6.8" fill="#6e8264" opacity="0.44"/><ellipse cx="139.5" cy="203.7" rx="3.6" ry="8.3" fill="#8e9f80" opacity="0.69"/><ellipse cx="84.5" cy="269.9" rx="3.6" ry="12.2" fill="#60755a" opacity="0.45"/><ellipse cx="10.1" cy="233.2" rx="2.8" ry="10.1" fill="#5a6e52" opacity="0.49"/><ellipse cx="28.9" cy="203.9" rx="1.9" ry="7.5" fill="#6e8264" opacity="0.66"/><ellipse cx="33.7" cy="245.0" rx="1.7" ry="5.9" fill="#a4b298" opacity="0.61"/><ellipse cx="126.2" cy="209.3" rx="3.0" ry="5.1" fill="#6e8264" opacity="0.78"/><ellipse cx="45.0" cy="229.0" rx="3.3" ry="8.6" fill="#98a78c" opacity="0.67"/><ellipse cx="24.0" cy="253.1" rx="2.3" ry="5.8" fill="#6e8264" opacity="0.79"/><ellipse cx="221.8" cy="263.7" rx="2.9" ry="6.7" fill="#324632" opacity="0.84"/><ellipse cx="196.6" cy="190.8" rx="3.8" ry="11.7" fill="#5a6e52" opacity="0.77"/><ellipse cx="99.6" cy="259.2" rx="3.7" ry="11.3" fill="#60755a" opacity="0.74"/><ellipse cx="99.6" cy="241.1" rx="1.7" ry="8.1" fill="#60755a" opacity="0.45"/><ellipse cx="216.8" cy="269.0" rx="3.8" ry="5.4" fill="#3a4e38" opacity="0.83"/><ellipse cx="162.9" cy="201.4" rx="3.1" ry="10.1" fill="#8e9f80" opacity="0.43"/><ellipse cx="126.1" cy="216.5" rx="2.0" ry="6.1" fill="#a4b298" opacity="0.84"/><ellipse cx="6.5" cy="239.0" rx="3.3" ry="7.3" fill="#a4b298" opacity="0.63"/><ellipse cx="186.0" cy="234.0" rx="1.5" ry="7.3" fill="#465a42" opacity="0.81"/><ellipse cx="134.7" cy="219.3" rx="3.9" ry="10.1" fill="#8a9a7e" opacity="0.69"/><ellipse cx="197.7" cy="171.4" rx="3.0" ry="11.8" fill="#6e8264" opacity="0.57"/><ellipse cx="229.1" cy="208.5" rx="3.9" ry="12.7" fill="#8e9f80" opacity="0.68"/><ellipse cx="15.2" cy="265.4" rx="2.6" ry="9.7" fill="#324632" opacity="0.54"/><ellipse cx="129.9" cy="215.8" rx="2.2" ry="13.4" fill="#465a42" opacity="0.41"/><ellipse cx="188.7" cy="227.1" rx="3.1" ry="8.7" fill="#a4b298" opacity="0.42"/><ellipse cx="77.6" cy="213.6" rx="3.0" ry="11.5" fill="#7c8e70" opacity="0.43"/><ellipse cx="221.0" cy="210.1" rx="2.7" ry="13.8" fill="#98a78c" opacity="0.42"/><ellipse cx="24.9" cy="254.6" rx="3.8" ry="6.3" fill="#5a6e52" opacity="0.67"/><ellipse cx="29.0" cy="240.0" rx="2.6" ry="6.8" fill="#6e8264" opacity="0.56"/><ellipse cx="38.6" cy="221.0" rx="1.8" ry="8.8" fill="#3a4e38" opacity="0.52"/><ellipse cx="142.5" cy="209.2" rx="3.4" ry="9.8" fill="#5a6e52" opacity="0.83"/><ellipse cx="179.4" cy="190.6" rx="1.8" ry="13.0" fill="#8e9f80" opacity="0.68"/><ellipse cx="88.3" cy="198.3" rx="3.2" ry="10.1" fill="#3a4e38" opacity="0.49"/><ellipse cx="68.7" cy="205.2" rx="3.9" ry="9.5" fill="#98a78c" opacity="0.80"/><ellipse cx="10.6" cy="192.7" rx="2.2" ry="8.8" fill="#8a9a7e" opacity="0.42"/><ellipse cx="55.1" cy="213.0" rx="3.4" ry="13.2" fill="#5a6e52" opacity="0.65"/><ellipse cx="154.4" cy="203.7" rx="2.7" ry="6.9" fill="#7c8e70" opacity="0.62"/><ellipse cx="33.4" cy="259.8" rx="3.5" ry="9.0" fill="#324632" opacity="0.78"/><ellipse cx="187.9" cy="212.7" rx="3.4" ry="8.5" fill="#5a6e52" opacity="0.57"/><ellipse cx="159.8" cy="268.9" rx="2.3" ry="9.9" fill="#6e8264" opacity="0.77"/><ellipse cx="45.7" cy="243.9" rx="3.0" ry="9.2" fill="#7c8e70" opacity="0.44"/><ellipse cx="21.2" cy="234.2" rx="2.7" ry="11.2" fill="#465a42" opacity="0.77"/><ellipse cx="3.3" cy="216.3" rx="3.8" ry="10.4" fill="#465a42" opacity="0.62"/><ellipse cx="186.7" cy="201.0" rx="3.7" ry="7.0" fill="#7c8e70" opacity="0.56"/><ellipse cx="29.5" cy="246.8" rx="2.9" ry="13.3" fill="#6e8264" opacity="0.81"/><ellipse cx="107.4" cy="249.6" rx="2.3" ry="7.9" fill="#60755a" opacity="0.84"/><ellipse cx="178.3" cy="219.3" rx="1.7" ry="12.5" fill="#6e8264" opacity="0.56"/><ellipse cx="97.1" cy="207.1" rx="2.0" ry="10.1" fill="#a4b298" opacity="0.64"/><ellipse cx="204.2" cy="224.5" rx="1.9" ry="11.8" fill="#465a42" opacity="0.77"/><ellipse cx="54.8" cy="195.7" rx="1.9" ry="7.7" fill="#6e8264" opacity="0.69"/><ellipse cx="196.4" cy="170.1" rx="2.9" ry="12.1" fill="#6e8264" opacity="0.55"/><ellipse cx="67.5" cy="194.7" rx="2.3" ry="5.2" fill="#a0ae92" opacity="0.44"/><ellipse cx="199.3" cy="208.7" rx="3.3" ry="9.4" fill="#8e9f80" opacity="0.55"/><ellipse cx="112.6" cy="203.7" rx="3.5" ry="8.0" fill="#5a6e52" opacity="0.62"/><ellipse cx="131.6" cy="240.9" rx="3.3" ry="13.2" fill="#60755a" opacity="0.74"/><ellipse cx="240.5" cy="212.8" rx="1.5" ry="8.4" fill="#8a9a7e" opacity="0.80"/><ellipse cx="233.7" cy="235.4" rx="2.8" ry="11.4" fill="#8a9a7e" opacity="0.59"/><ellipse cx="103.2" cy="180.8" rx="3.4" ry="13.9" fill="#adb9a0" opacity="0.71"/><ellipse cx="79.0" cy="212.0" rx="2.8" ry="7.5" fill="#6e8264" opacity="0.61"/><ellipse cx="178.6" cy="197.1" rx="1.9" ry="13.3" fill="#6e8264" opacity="0.74"/><ellipse cx="5.2" cy="228.8" rx="3.5" ry="7.8" fill="#98a78c" opacity="0.48"/><ellipse cx="53.8" cy="210.0" rx="3.3" ry="10.4" fill="#98a78c" opacity="0.60"/><ellipse cx="218.4" cy="207.7" rx="3.8" ry="13.4" fill="#8e9f80" opacity="0.82"/><ellipse cx="134.7" cy="254.9" rx="2.7" ry="8.6" fill="#3a4e38" opacity="0.70"/><ellipse cx="188.5" cy="176.1" rx="3.7" ry="8.6" fill="#a0ae92" opacity="0.83"/><ellipse cx="195.7" cy="204.5" rx="2.8" ry="9.6" fill="#465a42" opacity="0.75"/><ellipse cx="15.1" cy="263.6" rx="3.7" ry="12.9" fill="#3a4e38" opacity="0.60"/><ellipse cx="60.9" cy="223.3" rx="3.7" ry="8.7" fill="#7c8e70" opacity="0.47"/><ellipse cx="221.7" cy="250.1" rx="1.8" ry="11.7" fill="#324632" opacity="0.52"/><ellipse cx="130.9" cy="181.2" rx="3.4" ry="5.0" fill="#a0ae92" opacity="0.77"/><ellipse cx="21.0" cy="210.0" rx="3.3" ry="5.9" fill="#60755a" opacity="0.71"/><ellipse cx="21.1" cy="249.3" rx="2.9" ry="9.6" fill="#465a42" opacity="0.76"/><ellipse cx="102.3" cy="261.3" rx="1.7" ry="12.4" fill="#5a6e52" opacity="0.42"/><ellipse cx="101.4" cy="216.9" rx="3.9" ry="13.7" fill="#7c8e70" opacity="0.54"/><ellipse cx="19.5" cy="212.6" rx="2.7" ry="11.4" fill="#7c8e70" opacity="0.43"/><ellipse cx="35.2" cy="244.1" rx="3.2" ry="11.7" fill="#8a9a7e" opacity="0.69"/><ellipse cx="4.0" cy="221.1" rx="3.3" ry="7.1" fill="#3a4e38" opacity="0.45"/><ellipse cx="188.6" cy="255.1" rx="3.6" ry="11.5" fill="#324632" opacity="0.47"/><ellipse cx="153.5" cy="263.4" rx="3.4" ry="13.6" fill="#60755a" opacity="0.65"/><ellipse cx="22.1" cy="203.6" rx="2.4" ry="6.0" fill="#98a78c" opacity="0.83"/><ellipse cx="137.8" cy="241.7" rx="2.3" ry="12.4" fill="#465a42" opacity="0.45"/><ellipse cx="152.1" cy="177.3" rx="3.1" ry="6.6" fill="#a0ae92" opacity="0.58"/><ellipse cx="204.4" cy="227.7" rx="1.7" ry="7.0" fill="#5a6e52" opacity="0.84"/><ellipse cx="106.4" cy="246.3" rx="2.4" ry="12.4" fill="#324632" opacity="0.46"/><ellipse cx="50.9" cy="204.1" rx="3.2" ry="9.3" fill="#adb9a0" opacity="0.68"/><ellipse cx="177.6" cy="229.4" rx="2.3" ry="12.1" fill="#98a78c" opacity="0.70"/><ellipse cx="148.9" cy="164.1" rx="2.3" ry="8.1" fill="#adb9a0" opacity="0.45"/><ellipse cx="92.8" cy="220.9" rx="3.5" ry="12.4" fill="#3a4e38" opacity="0.72"/><ellipse cx="62.7" cy="232.5" rx="2.2" ry="7.1" fill="#3a4e38" opacity="0.63"/><ellipse cx="35.4" cy="247.7" rx="4.0" ry="9.6" fill="#6e8264" opacity="0.72"/><ellipse cx="228.4" cy="226.5" rx="1.6" ry="10.9" fill="#8a9a7e" opacity="0.46"/><ellipse cx="117.1" cy="209.6" rx="2.3" ry="5.8" fill="#7c8e70" opacity="0.52"/><ellipse cx="215.6" cy="213.2" rx="3.3" ry="7.1" fill="#3a4e38" opacity="0.64"/><ellipse cx="137.3" cy="225.1" rx="2.2" ry="13.2" fill="#7c8e70" opacity="0.67"/><ellipse cx="30.8" cy="256.1" rx="2.2" ry="13.1" fill="#5a6e52" opacity="0.74"/><ellipse cx="89.2" cy="187.7" rx="3.0" ry="12.3" fill="#adb9a0" opacity="0.41"/><ellipse cx="44.8" cy="269.0" rx="3.8" ry="10.9" fill="#3a4e38" opacity="0.74"/><ellipse cx="206.9" cy="260.4" rx="3.0" ry="10.8" fill="#465a42" opacity="0.47"/><ellipse cx="363.0" cy="111.8" rx="3.1" ry="7.3" fill="#adb9a0" opacity="0.48"/><ellipse cx="394.9" cy="148.7" rx="3.2" ry="9.7" fill="#6e8264" opacity="0.72"/><ellipse cx="474.1" cy="174.3" rx="3.0" ry="7.1" fill="#7c8e70" opacity="0.59"/><ellipse cx="425.6" cy="219.8" rx="3.8" ry="14.3" fill="#60755a" opacity="0.80"/><ellipse cx="378.2" cy="254.7" rx="3.6" ry="15.1" fill="#465a42" opacity="0.65"/><ellipse cx="509.0" cy="199.3" rx="3.1" ry="10.8" fill="#6e8264" opacity="0.54"/><ellipse cx="257.2" cy="238.0" rx="4.2" ry="14.1" fill="#324632" opacity="0.54"/><ellipse cx="474.7" cy="251.2" rx="4.1" ry="8.7" fill="#60755a" opacity="0.51"/><ellipse cx="499.4" cy="265.7" rx="3.0" ry="7.2" fill="#5a6e52" opacity="0.65"/><ellipse cx="435.4" cy="260.2" rx="4.2" ry="17.0" fill="#6e8264" opacity="0.83"/><ellipse cx="438.0" cy="248.0" rx="2.8" ry="14.9" fill="#5a6e52" opacity="0.69"/><ellipse cx="365.8" cy="125.6" rx="1.8" ry="11.7" fill="#a0ae92" opacity="0.46"/><ellipse cx="400.1" cy="262.0" rx="1.6" ry="8.7" fill="#3a4e38" opacity="0.41"/><ellipse cx="291.9" cy="186.1" rx="2.9" ry="11.8" fill="#5a6e52" opacity="0.56"/><ellipse cx="414.3" cy="112.7" rx="1.7" ry="15.9" fill="#98a78c" opacity="0.55"/><ellipse cx="283.4" cy="237.7" rx="3.9" ry="15.7" fill="#5a6e52" opacity="0.53"/><ellipse cx="514.1" cy="255.1" rx="2.2" ry="15.2" fill="#3a4e38" opacity="0.80"/><ellipse cx="245.7" cy="236.0" rx="3.6" ry="12.2" fill="#8e9f80" opacity="0.68"/><ellipse cx="297.7" cy="251.6" rx="1.7" ry="7.2" fill="#6e8264" opacity="0.77"/><ellipse cx="525.6" cy="177.1" rx="2.8" ry="15.7" fill="#7c8e70" opacity="0.71"/><ellipse cx="518.6" cy="193.1" rx="1.8" ry="8.5" fill="#465a42" opacity="0.45"/><ellipse cx="445.6" cy="151.0" rx="3.7" ry="11.5" fill="#465a42" opacity="0.76"/><ellipse cx="351.3" cy="215.4" rx="4.2" ry="12.5" fill="#98a78c" opacity="0.84"/><ellipse cx="506.1" cy="145.8" rx="2.3" ry="7.5" fill="#6e8264" opacity="0.61"/><ellipse cx="263.6" cy="259.5" rx="1.8" ry="16.0" fill="#465a42" opacity="0.67"/><ellipse cx="325.2" cy="151.9" rx="3.9" ry="7.0" fill="#465a42" opacity="0.84"/><ellipse cx="297.1" cy="144.4" rx="3.7" ry="6.3" fill="#a0ae92" opacity="0.84"/><ellipse cx="250.9" cy="213.5" rx="3.8" ry="10.2" fill="#60755a" opacity="0.43"/><ellipse cx="260.0" cy="242.9" rx="4.2" ry="9.5" fill="#60755a" opacity="0.75"/><ellipse cx="394.0" cy="188.4" rx="4.1" ry="13.5" fill="#8e9f80" opacity="0.73"/><ellipse cx="398.4" cy="203.6" rx="3.8" ry="7.2" fill="#a4b298" opacity="0.51"/><ellipse cx="371.4" cy="232.8" rx="3.9" ry="14.7" fill="#5a6e52" opacity="0.52"/><ellipse cx="402.1" cy="246.1" rx="3.3" ry="8.9" fill="#5a6e52" opacity="0.67"/><ellipse cx="452.6" cy="201.0" rx="4.1" ry="8.0" fill="#5a6e52" opacity="0.67"/><ellipse cx="421.1" cy="238.4" rx="3.1" ry="14.0" fill="#465a42" opacity="0.43"/><ellipse cx="509.6" cy="206.0" rx="3.2" ry="14.7" fill="#98a78c" opacity="0.68"/><ellipse cx="257.0" cy="203.2" rx="3.6" ry="15.0" fill="#8e9f80" opacity="0.75"/><ellipse cx="467.5" cy="188.5" rx="3.5" ry="11.6" fill="#a4b298" opacity="0.51"/><ellipse cx="288.3" cy="224.3" rx="4.0" ry="14.7" fill="#6e8264" opacity="0.54"/><ellipse cx="379.2" cy="221.2" rx="3.6" ry="16.5" fill="#5a6e52" opacity="0.62"/><ellipse cx="466.3" cy="267.7" rx="2.0" ry="11.0" fill="#6e8264" opacity="0.84"/><ellipse cx="242.0" cy="220.3" rx="3.1" ry="7.0" fill="#8e9f80" opacity="0.53"/><ellipse cx="366.6" cy="117.7" rx="1.7" ry="17.0" fill="#8a9a7e" opacity="0.50"/><ellipse cx="315.9" cy="200.3" rx="2.3" ry="11.1" fill="#98a78c" opacity="0.56"/><ellipse cx="340.8" cy="267.0" rx="3.4" ry="6.4" fill="#60755a" opacity="0.66"/><ellipse cx="535.4" cy="242.4" rx="3.2" ry="16.0" fill="#324632" opacity="0.82"/><ellipse cx="293.5" cy="248.9" rx="4.3" ry="8.3" fill="#60755a" opacity="0.75"/><ellipse cx="304.8" cy="168.1" rx="2.1" ry="12.0" fill="#5a6e52" opacity="0.62"/><ellipse cx="359.5" cy="204.0" rx="3.8" ry="11.2" fill="#60755a" opacity="0.85"/><ellipse cx="442.0" cy="247.5" rx="2.2" ry="10.2" fill="#465a42" opacity="0.42"/><ellipse cx="322.8" cy="262.0" rx="3.4" ry="11.7" fill="#6e8264" opacity="0.52"/><ellipse cx="357.3" cy="257.6" rx="3.7" ry="9.0" fill="#3a4e38" opacity="0.43"/><ellipse cx="456.5" cy="233.8" rx="2.0" ry="8.6" fill="#465a42" opacity="0.41"/><ellipse cx="336.3" cy="170.7" rx="1.8" ry="15.7" fill="#7c8e70" opacity="0.52"/><ellipse cx="501.1" cy="218.9" rx="2.5" ry="12.7" fill="#60755a" opacity="0.42"/><ellipse cx="285.7" cy="210.8" rx="1.7" ry="9.4" fill="#a4b298" opacity="0.62"/><ellipse cx="446.4" cy="191.5" rx="3.2" ry="9.5" fill="#60755a" opacity="0.70"/><ellipse cx="284.6" cy="154.3" rx="2.4" ry="13.8" fill="#adb9a0" opacity="0.46"/><ellipse cx="394.0" cy="163.7" rx="1.9" ry="10.1" fill="#3a4e38" opacity="0.50"/><ellipse cx="253.0" cy="163.6" rx="3.4" ry="12.2" fill="#98a78c" opacity="0.70"/><ellipse cx="260.8" cy="252.0" rx="3.2" ry="9.9" fill="#465a42" opacity="0.83"/><ellipse cx="498.0" cy="150.3" rx="3.4" ry="7.0" fill="#adb9a0" opacity="0.45"/><ellipse cx="386.9" cy="186.0" rx="4.3" ry="9.1" fill="#465a42" opacity="0.50"/><ellipse cx="514.9" cy="155.8" rx="3.8" ry="9.9" fill="#a0ae92" opacity="0.63"/><ellipse cx="460.9" cy="254.9" rx="3.9" ry="11.3" fill="#3a4e38" opacity="0.72"/><ellipse cx="404.7" cy="221.3" rx="1.7" ry="10.3" fill="#3a4e38" opacity="0.81"/><ellipse cx="511.1" cy="163.0" rx="2.7" ry="15.3" fill="#465a42" opacity="0.61"/><ellipse cx="337.4" cy="149.4" rx="1.7" ry="9.8" fill="#7c8e70" opacity="0.65"/><ellipse cx="318.5" cy="218.5" rx="2.1" ry="11.2" fill="#3a4e38" opacity="0.55"/><ellipse cx="506.7" cy="123.5" rx="3.7" ry="8.4" fill="#6e8264" opacity="0.68"/><ellipse cx="424.8" cy="174.7" rx="2.8" ry="9.0" fill="#60755a" opacity="0.80"/><ellipse cx="354.0" cy="255.4" rx="1.7" ry="7.5" fill="#324632" opacity="0.52"/><ellipse cx="387.5" cy="183.1" rx="1.7" ry="12.7" fill="#465a42" opacity="0.50"/><ellipse cx="442.3" cy="144.6" rx="1.6" ry="12.0" fill="#adb9a0" opacity="0.40"/><ellipse cx="402.9" cy="245.5" rx="3.8" ry="6.9" fill="#324632" opacity="0.80"/><ellipse cx="445.6" cy="236.9" rx="2.4" ry="7.1" fill="#465a42" opacity="0.54"/><ellipse cx="452.9" cy="220.8" rx="3.6" ry="16.6" fill="#5a6e52" opacity="0.47"/><ellipse cx="425.0" cy="187.7" rx="3.2" ry="10.1" fill="#465a42" opacity="0.57"/><ellipse cx="438.7" cy="187.3" rx="3.5" ry="10.0" fill="#5a6e52" opacity="0.81"/><ellipse cx="459.3" cy="250.0" rx="4.5" ry="15.0" fill="#6e8264" opacity="0.54"/><ellipse cx="492.3" cy="192.3" rx="3.6" ry="6.4" fill="#3a4e38" opacity="0.79"/><ellipse cx="498.5" cy="122.2" rx="2.3" ry="11.6" fill="#adb9a0" opacity="0.51"/><ellipse cx="428.9" cy="167.8" rx="3.6" ry="8.0" fill="#98a78c" opacity="0.78"/><ellipse cx="486.2" cy="200.0" rx="2.8" ry="13.8" fill="#3a4e38" opacity="0.73"/><ellipse cx="320.6" cy="139.4" rx="2.2" ry="12.8" fill="#98a78c" opacity="0.50"/><ellipse cx="295.7" cy="119.9" rx="3.3" ry="16.4" fill="#a0ae92" opacity="0.52"/><ellipse cx="321.2" cy="153.4" rx="3.5" ry="10.3" fill="#5a6e52" opacity="0.42"/><ellipse cx="452.1" cy="127.8" rx="1.7" ry="9.1" fill="#8a9a7e" opacity="0.85"/><ellipse cx="276.6" cy="175.8" rx="1.7" ry="12.0" fill="#60755a" opacity="0.48"/><ellipse cx="260.9" cy="201.0" rx="4.1" ry="13.1" fill="#98a78c" opacity="0.58"/><ellipse cx="423.9" cy="232.0" rx="4.4" ry="10.3" fill="#6e8264" opacity="0.50"/><ellipse cx="324.7" cy="249.0" rx="2.9" ry="15.2" fill="#324632" opacity="0.82"/><ellipse cx="315.4" cy="190.4" rx="1.9" ry="9.6" fill="#6e8264" opacity="0.52"/><ellipse cx="409.4" cy="151.2" rx="2.8" ry="9.5" fill="#8a9a7e" opacity="0.62"/><ellipse cx="349.3" cy="150.1" rx="1.7" ry="6.7" fill="#465a42" opacity="0.70"/><ellipse cx="242.2" cy="213.8" rx="2.0" ry="14.7" fill="#a4b298" opacity="0.62"/><ellipse cx="363.7" cy="238.4" rx="2.7" ry="6.6" fill="#324632" opacity="0.68"/><ellipse cx="485.8" cy="149.0" rx="2.1" ry="9.2" fill="#98a78c" opacity="0.85"/><ellipse cx="372.2" cy="242.8" rx="3.7" ry="7.9" fill="#465a42" opacity="0.83"/><ellipse cx="400.5" cy="217.1" rx="2.4" ry="6.3" fill="#8e9f80" opacity="0.54"/><ellipse cx="393.2" cy="106.5" rx="2.2" ry="16.6" fill="#6e8264" opacity="0.75"/><ellipse cx="319.4" cy="152.9" rx="4.3" ry="11.4" fill="#465a42" opacity="0.76"/><ellipse cx="486.0" cy="232.4" rx="4.5" ry="7.1" fill="#60755a" opacity="0.58"/><ellipse cx="449.8" cy="149.0" rx="4.2" ry="6.3" fill="#3a4e38" opacity="0.46"/><ellipse cx="336.8" cy="225.5" rx="3.1" ry="9.0" fill="#3a4e38" opacity="0.68"/><ellipse cx="374.1" cy="157.7" rx="1.8" ry="13.2" fill="#3a4e38" opacity="0.44"/><ellipse cx="340.1" cy="228.1" rx="2.2" ry="14.2" fill="#324632" opacity="0.54"/><ellipse cx="302.0" cy="168.9" rx="2.1" ry="10.1" fill="#5a6e52" opacity="0.59"/><ellipse cx="243.8" cy="226.0" rx="2.8" ry="9.5" fill="#8e9f80" opacity="0.78"/><ellipse cx="466.4" cy="110.5" rx="2.1" ry="6.7" fill="#8a9a7e" opacity="0.45"/><ellipse cx="533.3" cy="206.8" rx="4.4" ry="8.4" fill="#a4b298" opacity="0.75"/><ellipse cx="503.8" cy="241.3" rx="1.8" ry="10.3" fill="#3a4e38" opacity="0.80"/><ellipse cx="471.2" cy="193.4" rx="1.6" ry="14.0" fill="#a4b298" opacity="0.81"/><ellipse cx="257.4" cy="225.1" rx="2.6" ry="10.8" fill="#a4b298" opacity="0.63"/><ellipse cx="409.0" cy="125.2" rx="4.0" ry="13.6" fill="#adb9a0" opacity="0.60"/><ellipse cx="379.3" cy="243.5" rx="3.1" ry="10.1" fill="#324632" opacity="0.66"/><ellipse cx="393.5" cy="110.2" rx="3.4" ry="10.9" fill="#8a9a7e" opacity="0.42"/><ellipse cx="257.2" cy="191.3" rx="3.2" ry="9.6" fill="#465a42" opacity="0.73"/><ellipse cx="333.6" cy="227.7" rx="4.5" ry="10.4" fill="#5a6e52" opacity="0.74"/><ellipse cx="506.6" cy="135.6" rx="2.1" ry="16.2" fill="#a0ae92" opacity="0.77"/><ellipse cx="477.1" cy="191.7" rx="4.5" ry="6.7" fill="#6e8264" opacity="0.72"/><ellipse cx="315.2" cy="240.0" rx="2.9" ry="11.9" fill="#60755a" opacity="0.49"/><ellipse cx="323.8" cy="214.1" rx="1.8" ry="12.1" fill="#60755a" opacity="0.79"/><ellipse cx="262.4" cy="207.2" rx="1.8" ry="15.6" fill="#8a9a7e" opacity="0.76"/><ellipse cx="285.9" cy="177.2" rx="1.9" ry="6.4" fill="#7c8e70" opacity="0.83"/><ellipse cx="306.0" cy="158.6" rx="2.8" ry="12.8" fill="#6e8264" opacity="0.78"/><ellipse cx="423.6" cy="254.1" rx="1.8" ry="16.9" fill="#5a6e52" opacity="0.64"/><ellipse cx="334.7" cy="263.1" rx="4.4" ry="12.2" fill="#60755a" opacity="0.57"/><ellipse cx="482.7" cy="221.6" rx="4.0" ry="16.4" fill="#6e8264" opacity="0.67"/><ellipse cx="446.7" cy="136.9" rx="2.0" ry="13.6" fill="#adb9a0" opacity="0.42"/><ellipse cx="323.4" cy="153.7" rx="2.6" ry="12.9" fill="#465a42" opacity="0.49"/><ellipse cx="535.5" cy="237.6" rx="3.7" ry="10.0" fill="#3a4e38" opacity="0.75"/><ellipse cx="300.3" cy="126.7" rx="2.4" ry="10.1" fill="#8a9a7e" opacity="0.58"/><ellipse cx="376.2" cy="189.7" rx="4.3" ry="9.8" fill="#a4b298" opacity="0.51"/><ellipse cx="412.5" cy="152.5" rx="4.1" ry="9.2" fill="#8a9a7e" opacity="0.70"/><ellipse cx="375.7" cy="259.2" rx="2.7" ry="14.2" fill="#324632" opacity="0.50"/><ellipse cx="430.3" cy="167.4" rx="2.6" ry="12.4" fill="#465a42" opacity="0.53"/><ellipse cx="446.7" cy="216.7" rx="2.3" ry="10.5" fill="#5a6e52" opacity="0.67"/><ellipse cx="497.4" cy="174.1" rx="2.4" ry="7.1" fill="#3a4e38" opacity="0.45"/><ellipse cx="435.6" cy="180.4" rx="2.2" ry="14.7" fill="#6e8264" opacity="0.57"/><ellipse cx="455.0" cy="216.4" rx="2.6" ry="15.9" fill="#6e8264" opacity="0.70"/><ellipse cx="287.1" cy="133.6" rx="2.1" ry="11.6" fill="#adb9a0" opacity="0.70"/><ellipse cx="420.2" cy="265.2" rx="4.4" ry="16.9" fill="#60755a" opacity="0.60"/><ellipse cx="309.1" cy="198.2" rx="1.9" ry="6.6" fill="#60755a" opacity="0.70"/><ellipse cx="474.9" cy="259.1" rx="3.1" ry="12.4" fill="#60755a" opacity="0.57"/><ellipse cx="283.3" cy="182.4" rx="3.8" ry="6.9" fill="#5a6e52" opacity="0.83"/><ellipse cx="447.0" cy="235.3" rx="4.2" ry="13.3" fill="#6e8264" opacity="0.61"/><ellipse cx="502.7" cy="182.9" rx="2.1" ry="10.1" fill="#7c8e70" opacity="0.83"/><ellipse cx="506.2" cy="122.2" rx="2.6" ry="11.9" fill="#8a9a7e" opacity="0.84"/><ellipse cx="470.8" cy="123.8" rx="4.5" ry="12.2" fill="#6e8264" opacity="0.66"/><ellipse cx="279.4" cy="140.1" rx="3.1" ry="9.2" fill="#a0ae92" opacity="0.51"/><ellipse cx="363.5" cy="115.1" rx="2.2" ry="11.0" fill="#8a9a7e" opacity="0.45"/><ellipse cx="281.7" cy="255.4" rx="3.9" ry="11.5" fill="#5a6e52" opacity="0.84"/><ellipse cx="396.4" cy="172.5" rx="3.4" ry="15.5" fill="#8a9a7e" opacity="0.59"/><ellipse cx="244.2" cy="194.3" rx="4.0" ry="14.1" fill="#adb9a0" opacity="0.47"/><ellipse cx="398.2" cy="111.1" rx="1.9" ry="9.3" fill="#8a9a7e" opacity="0.69"/><ellipse cx="491.9" cy="117.8" rx="2.8" ry="6.9" fill="#98a78c" opacity="0.64"/><ellipse cx="435.5" cy="174.8" rx="4.2" ry="8.2" fill="#8e9f80" opacity="0.83"/><ellipse cx="409.1" cy="188.4" rx="4.2" ry="10.3" fill="#465a42" opacity="0.52"/><ellipse cx="418.5" cy="142.2" rx="1.8" ry="14.7" fill="#adb9a0" opacity="0.56"/><ellipse cx="368.4" cy="179.6" rx="1.7" ry="15.2" fill="#6e8264" opacity="0.47"/><ellipse cx="354.1" cy="160.9" rx="4.0" ry="13.4" fill="#7c8e70" opacity="0.41"/><ellipse cx="347.4" cy="262.0" rx="3.1" ry="11.8" fill="#6e8264" opacity="0.40"/><ellipse cx="361.4" cy="264.5" rx="1.6" ry="12.5" fill="#5a6e52" opacity="0.56"/><ellipse cx="418.0" cy="166.5" rx="2.5" ry="12.7" fill="#3a4e38" opacity="0.43"/><ellipse cx="295.4" cy="135.9" rx="3.8" ry="9.8" fill="#6e8264" opacity="0.50"/><ellipse cx="415.5" cy="238.3" rx="4.3" ry="13.1" fill="#3a4e38" opacity="0.58"/><ellipse cx="325.6" cy="219.5" rx="1.8" ry="16.8" fill="#465a42" opacity="0.55"/><ellipse cx="334.9" cy="240.9" rx="3.9" ry="13.1" fill="#465a42" opacity="0.85"/><ellipse cx="386.1" cy="170.6" rx="1.8" ry="7.5" fill="#7c8e70" opacity="0.69"/><ellipse cx="247.6" cy="263.6" rx="3.8" ry="12.4" fill="#465a42" opacity="0.77"/><ellipse cx="382.8" cy="161.5" rx="3.4" ry="16.0" fill="#8a9a7e" opacity="0.48"/><ellipse cx="265.7" cy="229.4" rx="2.0" ry="14.3" fill="#a4b298" opacity="0.76"/><ellipse cx="372.7" cy="253.2" rx="3.7" ry="15.2" fill="#3a4e38" opacity="0.70"/><ellipse cx="403.2" cy="126.3" rx="1.9" ry="9.4" fill="#8a9a7e" opacity="0.45"/><ellipse cx="497.9" cy="128.7" rx="2.5" ry="7.5" fill="#6e8264" opacity="0.47"/><ellipse cx="322.1" cy="177.4" rx="4.2" ry="16.2" fill="#98a78c" opacity="0.70"/><ellipse cx="515.7" cy="198.1" rx="3.6" ry="10.3" fill="#60755a" opacity="0.45"/><ellipse cx="460.7" cy="133.8" rx="3.3" ry="8.2" fill="#98a78c" opacity="0.77"/><ellipse cx="433.8" cy="168.3" rx="3.9" ry="13.5" fill="#60755a" opacity="0.66"/><ellipse cx="490.3" cy="167.1" rx="3.3" ry="11.3" fill="#a4b298" opacity="0.55"/><ellipse cx="447.4" cy="145.7" rx="2.4" ry="14.0" fill="#8a9a7e" opacity="0.42"/><ellipse cx="513.8" cy="241.6" rx="2.3" ry="8.7" fill="#5a6e52" opacity="0.59"/><ellipse cx="423.8" cy="198.6" rx="4.4" ry="16.0" fill="#60755a" opacity="0.57"/><ellipse cx="275.8" cy="156.2" rx="3.4" ry="13.5" fill="#8a9a7e" opacity="0.78"/><ellipse cx="251.4" cy="238.1" rx="3.2" ry="12.1" fill="#3a4e38" opacity="0.62"/><ellipse cx="373.2" cy="265.2" rx="2.6" ry="9.3" fill="#5a6e52" opacity="0.75"/><ellipse cx="305.7" cy="144.7" rx="3.2" ry="12.7" fill="#6e8264" opacity="0.47"/><ellipse cx="297.3" cy="142.7" rx="4.5" ry="10.1" fill="#98a78c" opacity="0.56"/><ellipse cx="522.5" cy="232.4" rx="2.4" ry="15.4" fill="#6e8264" opacity="0.84"/><ellipse cx="273.7" cy="181.6" rx="2.1" ry="15.8" fill="#465a42" opacity="0.53"/><ellipse cx="407.0" cy="149.8" rx="1.8" ry="6.3" fill="#465a42" opacity="0.82"/><ellipse cx="286.0" cy="180.6" rx="4.0" ry="12.0" fill="#5a6e52" opacity="0.67"/><ellipse cx="402.0" cy="226.8" rx="3.2" ry="13.3" fill="#324632" opacity="0.75"/><ellipse cx="317.9" cy="123.3" rx="4.3" ry="10.0" fill="#8a9a7e" opacity="0.51"/><ellipse cx="375.0" cy="167.4" rx="3.7" ry="16.4" fill="#8e9f80" opacity="0.52"/><ellipse cx="456.1" cy="251.4" rx="1.8" ry="12.0" fill="#324632" opacity="0.82"/><ellipse cx="435.5" cy="117.9" rx="4.2" ry="7.1" fill="#8a9a7e" opacity="0.83"/><ellipse cx="298.8" cy="172.8" rx="2.6" ry="7.5" fill="#8a9a7e" opacity="0.46"/><ellipse cx="363.3" cy="129.6" rx="4.2" ry="16.7" fill="#8a9a7e" opacity="0.64"/><ellipse cx="370.3" cy="217.4" rx="1.8" ry="13.6" fill="#3a4e38" opacity="0.62"/><ellipse cx="299.5" cy="224.6" rx="2.8" ry="11.3" fill="#465a42" opacity="0.71"/><ellipse cx="249.7" cy="263.8" rx="4.2" ry="7.0" fill="#3a4e38" opacity="0.52"/><ellipse cx="305.9" cy="156.1" rx="2.0" ry="12.0" fill="#5a6e52" opacity="0.79"/><ellipse cx="517.7" cy="133.3" rx="3.0" ry="12.5" fill="#8a9a7e" opacity="0.68"/><ellipse cx="422.5" cy="259.2" rx="1.9" ry="11.7" fill="#465a42" opacity="0.45"/><ellipse cx="329.2" cy="158.7" rx="4.5" ry="10.6" fill="#5a6e52" opacity="0.77"/><ellipse cx="444.8" cy="191.7" rx="3.3" ry="14.3" fill="#8a9a7e" opacity="0.40"/><ellipse cx="261.1" cy="244.7" rx="4.4" ry="15.2" fill="#60755a" opacity="0.56"/><ellipse cx="305.9" cy="174.8" rx="4.2" ry="8.7" fill="#6e8264" opacity="0.66"/><ellipse cx="396.7" cy="160.9" rx="3.6" ry="11.0" fill="#98a78c" opacity="0.82"/><ellipse cx="363.6" cy="139.0" rx="2.2" ry="11.0" fill="#a0ae92" opacity="0.75"/><ellipse cx="339.5" cy="146.5" rx="3.5" ry="8.9" fill="#8e9f80" opacity="0.66"/><ellipse cx="410.7" cy="109.7" rx="2.5" ry="6.7" fill="#8a9a7e" opacity="0.55"/><ellipse cx="456.0" cy="217.1" rx="3.9" ry="11.9" fill="#8a9a7e" opacity="0.71"/><ellipse cx="390.1" cy="177.5" rx="1.7" ry="12.1" fill="#5a6e52" opacity="0.57"/><ellipse cx="346.5" cy="255.5" rx="4.5" ry="10.3" fill="#5a6e52" opacity="0.59"/><ellipse cx="439.5" cy="143.5" rx="4.5" ry="8.3" fill="#98a78c" opacity="0.65"/><ellipse cx="520.4" cy="143.0" rx="4.4" ry="16.0" fill="#6e8264" opacity="0.62"/><ellipse cx="353.6" cy="119.3" rx="4.3" ry="7.6" fill="#a0ae92" opacity="0.47"/><ellipse cx="386.9" cy="142.6" rx="2.5" ry="7.5" fill="#a0ae92" opacity="0.46"/><ellipse cx="452.5" cy="261.2" rx="2.2" ry="7.5" fill="#6e8264" opacity="0.51"/><ellipse cx="492.3" cy="251.8" rx="3.5" ry="10.0" fill="#6e8264" opacity="0.45"/><ellipse cx="321.8" cy="260.5" rx="1.8" ry="8.0" fill="#3a4e38" opacity="0.70"/><ellipse cx="277.4" cy="174.1" rx="3.3" ry="9.0" fill="#8e9f80" opacity="0.64"/><ellipse cx="409.0" cy="231.1" rx="3.1" ry="16.4" fill="#465a42" opacity="0.69"/><ellipse cx="245.9" cy="262.7" rx="4.4" ry="16.3" fill="#6e8264" opacity="0.63"/><ellipse cx="288.5" cy="171.0" rx="3.2" ry="9.2" fill="#3a4e38" opacity="0.61"/><ellipse cx="419.5" cy="244.8" rx="2.9" ry="8.1" fill="#60755a" opacity="0.84"/><ellipse cx="248.2" cy="246.5" rx="2.8" ry="6.6" fill="#5a6e52" opacity="0.42"/><ellipse cx="359.8" cy="241.2" rx="4.4" ry="6.3" fill="#60755a" opacity="0.76"/><ellipse cx="388.8" cy="212.6" rx="2.9" ry="8.0" fill="#6e8264" opacity="0.47"/><ellipse cx="528.7" cy="189.3" rx="4.1" ry="12.2" fill="#60755a" opacity="0.51"/><ellipse cx="460.9" cy="133.7" rx="2.0" ry="12.4" fill="#8a9a7e" opacity="0.59"/><ellipse cx="400.9" cy="182.2" rx="2.6" ry="16.1" fill="#98a78c" opacity="0.70"/><ellipse cx="425.1" cy="252.4" rx="3.5" ry="11.2" fill="#324632" opacity="0.84"/><ellipse cx="326.4" cy="138.9" rx="3.7" ry="8.6" fill="#8a9a7e" opacity="0.58"/><ellipse cx="448.8" cy="163.2" rx="3.5" ry="13.0" fill="#6e8264" opacity="0.56"/><ellipse cx="406.6" cy="188.1" rx="4.3" ry="11.7" fill="#a4b298" opacity="0.71"/><ellipse cx="437.2" cy="171.5" rx="3.0" ry="15.3" fill="#3a4e38" opacity="0.61"/><ellipse cx="267.6" cy="204.0" rx="3.0" ry="13.1" fill="#6e8264" opacity="0.53"/><ellipse cx="372.0" cy="120.1" rx="3.9" ry="8.6" fill="#adb9a0" opacity="0.76"/><ellipse cx="316.4" cy="254.9" rx="3.1" ry="10.7" fill="#324632" opacity="0.43"/><ellipse cx="262.4" cy="252.4" rx="2.0" ry="9.5" fill="#6e8264" opacity="0.63"/><ellipse cx="342.4" cy="139.2" rx="2.2" ry="15.2" fill="#98a78c" opacity="0.84"/><ellipse cx="512.5" cy="224.2" rx="3.9" ry="13.8" fill="#465a42" opacity="0.76"/><ellipse cx="293.2" cy="242.1" rx="2.5" ry="8.7" fill="#465a42" opacity="0.83"/><ellipse cx="435.7" cy="183.3" rx="3.5" ry="13.4" fill="#a4b298" opacity="0.82"/><ellipse cx="431.7" cy="117.9" rx="3.5" ry="7.2" fill="#98a78c" opacity="0.79"/><ellipse cx="332.9" cy="139.4" rx="3.6" ry="14.3" fill="#8a9a7e" opacity="0.69"/><ellipse cx="462.7" cy="215.8" rx="2.9" ry="10.5" fill="#a4b298" opacity="0.75"/><ellipse cx="499.6" cy="203.0" rx="4.3" ry="13.0" fill="#60755a" opacity="0.50"/><ellipse cx="451.5" cy="115.2" rx="4.2" ry="11.5" fill="#a0ae92" opacity="0.50"/><ellipse cx="424.0" cy="127.1" rx="2.0" ry="10.7" fill="#adb9a0" opacity="0.52"/><ellipse cx="296.5" cy="216.2" rx="3.6" ry="16.4" fill="#7c8e70" opacity="0.55"/><ellipse cx="257.1" cy="156.7" rx="3.1" ry="12.4" fill="#98a78c" opacity="0.83"/><ellipse cx="470.1" cy="162.2" rx="2.4" ry="11.7" fill="#60755a" opacity="0.43"/><ellipse cx="269.6" cy="230.6" rx="1.7" ry="14.3" fill="#324632" opacity="0.51"/><ellipse cx="300.0" cy="205.4" rx="2.3" ry="9.6" fill="#8a9a7e" opacity="0.55"/><ellipse cx="524.8" cy="178.8" rx="4.1" ry="15.4" fill="#8e9f80" opacity="0.59"/><ellipse cx="361.4" cy="145.3" rx="3.0" ry="16.5" fill="#6e8264" opacity="0.59"/><ellipse cx="381.9" cy="174.8" rx="3.4" ry="14.9" fill="#8e9f80" opacity="0.81"/><ellipse cx="315.3" cy="198.6" rx="4.5" ry="11.8" fill="#98a78c" opacity="0.48"/><ellipse cx="533.1" cy="227.2" rx="2.1" ry="16.7" fill="#3a4e38" opacity="0.73"/><ellipse cx="335.5" cy="232.4" rx="3.5" ry="13.8" fill="#60755a" opacity="0.43"/><ellipse cx="529.9" cy="264.3" rx="2.2" ry="8.8" fill="#465a42" opacity="0.65"/><ellipse cx="241.6" cy="225.4" rx="3.4" ry="15.6" fill="#a4b298" opacity="0.62"/><ellipse cx="473.3" cy="148.7" rx="4.0" ry="8.6" fill="#3a4e38" opacity="0.58"/><ellipse cx="266.7" cy="213.2" rx="2.3" ry="12.3" fill="#a4b298" opacity="0.41"/><ellipse cx="262.6" cy="193.9" rx="3.0" ry="7.2" fill="#98a78c" opacity="0.78"/><ellipse cx="385.0" cy="202.4" rx="2.5" ry="16.8" fill="#8a9a7e" opacity="0.55"/><ellipse cx="247.5" cy="254.0" rx="3.7" ry="12.3" fill="#6e8264" opacity="0.58"/><ellipse cx="503.6" cy="156.3" rx="3.9" ry="13.8" fill="#60755a" opacity="0.49"/><ellipse cx="437.2" cy="139.3" rx="2.9" ry="8.3" fill="#6e8264" opacity="0.59"/><ellipse cx="330.9" cy="233.6" rx="2.9" ry="11.2" fill="#324632" opacity="0.60"/><ellipse cx="352.3" cy="253.5" rx="4.4" ry="14.6" fill="#60755a" opacity="0.80"/><ellipse cx="263.2" cy="172.8" rx="2.3" ry="12.6" fill="#8a9a7e" opacity="0.70"/><ellipse cx="439.0" cy="176.8" rx="3.5" ry="8.5" fill="#8a9a7e" opacity="0.64"/><ellipse cx="531.1" cy="193.5" rx="3.7" ry="6.2" fill="#a4b298" opacity="0.56"/><ellipse cx="367.3" cy="120.0" rx="2.7" ry="15.5" fill="#98a78c" opacity="0.85"/><ellipse cx="299.2" cy="256.6" rx="1.8" ry="12.4" fill="#5a6e52" opacity="0.78"/><ellipse cx="356.8" cy="203.8" rx="3.7" ry="14.4" fill="#7c8e70" opacity="0.66"/><ellipse cx="315.5" cy="224.1" rx="3.2" ry="12.0" fill="#465a42" opacity="0.46"/><ellipse cx="472.1" cy="161.3" rx="3.7" ry="16.5" fill="#465a42" opacity="0.74"/><ellipse cx="342.6" cy="262.4" rx="2.5" ry="16.1" fill="#60755a" opacity="0.70"/><ellipse cx="326.6" cy="239.3" rx="2.8" ry="7.6" fill="#324632" opacity="0.42"/><ellipse cx="378.0" cy="198.2" rx="2.9" ry="6.2" fill="#465a42" opacity="0.56"/><ellipse cx="465.6" cy="119.2" rx="2.5" ry="13.6" fill="#98a78c" opacity="0.77"/><ellipse cx="353.5" cy="152.9" rx="2.6" ry="11.9" fill="#6e8264" opacity="0.64"/><ellipse cx="358.8" cy="173.4" rx="3.9" ry="12.9" fill="#3a4e38" opacity="0.51"/><ellipse cx="293.7" cy="136.8" rx="1.8" ry="14.7" fill="#a0ae92" opacity="0.52"/><ellipse cx="385.8" cy="220.0" rx="1.7" ry="15.0" fill="#3a4e38" opacity="0.50"/><ellipse cx="449.2" cy="221.4" rx="2.6" ry="15.7" fill="#5a6e52" opacity="0.78"/><ellipse cx="448.6" cy="112.7" rx="4.3" ry="14.7" fill="#98a78c" opacity="0.67"/><ellipse cx="533.2" cy="183.6" rx="2.2" ry="12.8" fill="#a0ae92" opacity="0.69"/><ellipse cx="513.8" cy="239.4" rx="4.2" ry="7.9" fill="#5a6e52" opacity="0.81"/><ellipse cx="441.4" cy="133.9" rx="2.6" ry="13.8" fill="#a0ae92" opacity="0.75"/><ellipse cx="335.3" cy="246.5" rx="3.0" ry="6.7" fill="#60755a" opacity="0.72"/><ellipse cx="254.9" cy="235.6" rx="1.8" ry="15.3" fill="#324632" opacity="0.82"/><ellipse cx="248.2" cy="203.0" rx="3.3" ry="14.4" fill="#60755a" opacity="0.67"/><ellipse cx="496.2" cy="122.5" rx="1.9" ry="6.2" fill="#8a9a7e" opacity="0.48"/><ellipse cx="321.7" cy="218.0" rx="3.6" ry="9.5" fill="#60755a" opacity="0.75"/><ellipse cx="306.4" cy="116.4" rx="2.3" ry="6.0" fill="#98a78c" opacity="0.53"/><ellipse cx="245.4" cy="211.2" rx="2.8" ry="7.9" fill="#5a6e52" opacity="0.45"/><ellipse cx="491.4" cy="185.2" rx="3.1" ry="9.4" fill="#3a4e38" opacity="0.76"/><ellipse cx="372.5" cy="223.9" rx="2.3" ry="15.0" fill="#3a4e38" opacity="0.63"/><ellipse cx="379.7" cy="193.6" rx="3.1" ry="14.7" fill="#98a78c" opacity="0.53"/><ellipse cx="328.7" cy="173.3" rx="3.5" ry="6.4" fill="#60755a" opacity="0.53"/><ellipse cx="297.6" cy="249.9" rx="4.0" ry="13.5" fill="#6e8264" opacity="0.57"/><ellipse cx="520.5" cy="146.2" rx="3.1" ry="8.5" fill="#8a9a7e" opacity="0.85"/><ellipse cx="512.4" cy="246.0" rx="1.8" ry="8.7" fill="#3a4e38" opacity="0.64"/><ellipse cx="393.4" cy="156.0" rx="4.1" ry="11.7" fill="#8a9a7e" opacity="0.64"/><ellipse cx="274.3" cy="251.5" rx="3.9" ry="13.9" fill="#465a42" opacity="0.60"/><ellipse cx="533.9" cy="258.6" rx="3.3" ry="12.0" fill="#465a42" opacity="0.66"/><ellipse cx="292.3" cy="189.5" rx="4.2" ry="13.4" fill="#98a78c" opacity="0.82"/><ellipse cx="434.1" cy="239.4" rx="4.5" ry="16.1" fill="#324632" opacity="0.41"/><ellipse cx="306.1" cy="216.2" rx="2.2" ry="6.8" fill="#465a42" opacity="0.55"/><ellipse cx="524.5" cy="212.6" rx="1.9" ry="13.0" fill="#465a42" opacity="0.48"/><ellipse cx="476.8" cy="145.6" rx="2.1" ry="9.8" fill="#a0ae92" opacity="0.76"/><ellipse cx="428.8" cy="228.0" rx="4.2" ry="13.1" fill="#3a4e38" opacity="0.76"/><ellipse cx="507.8" cy="231.2" rx="2.5" ry="7.3" fill="#465a42" opacity="0.82"/><ellipse cx="253.9" cy="221.6" rx="2.7" ry="15.1" fill="#465a42" opacity="0.57"/><ellipse cx="432.8" cy="174.8" rx="3.5" ry="6.4" fill="#3a4e38" opacity="0.53"/><ellipse cx="512.6" cy="222.7" rx="1.8" ry="8.1" fill="#98a78c" opacity="0.57"/><ellipse cx="518.0" cy="223.4" rx="1.9" ry="13.0" fill="#a4b298" opacity="0.82"/><ellipse cx="335.7" cy="110.0" rx="2.8" ry="12.5" fill="#6e8264" opacity="0.64"/><ellipse cx="255.4" cy="159.5" rx="4.5" ry="10.1" fill="#98a78c" opacity="0.58"/><ellipse cx="520.1" cy="221.3" rx="3.4" ry="8.2" fill="#6e8264" opacity="0.62"/><ellipse cx="467.7" cy="199.4" rx="2.3" ry="8.1" fill="#6e8264" opacity="0.44"/><ellipse cx="497.0" cy="118.2" rx="2.1" ry="11.1" fill="#adb9a0" opacity="0.68"/><ellipse cx="563.1" cy="206.9" rx="2.9" ry="6.5" fill="#465a42" opacity="0.47"/><ellipse cx="538.0" cy="168.1" rx="1.6" ry="14.8" fill="#adb9a0" opacity="0.47"/><ellipse cx="561.7" cy="167.5" rx="2.2" ry="15.9" fill="#6e8264" opacity="0.67"/><ellipse cx="540.9" cy="173.7" rx="2.4" ry="10.4" fill="#6e8264" opacity="0.69"/><ellipse cx="538.2" cy="175.3" rx="2.6" ry="9.8" fill="#a0ae92" opacity="0.57"/><ellipse cx="563.1" cy="165.0" rx="1.5" ry="9.1" fill="#8a9a7e" opacity="0.41"/><ellipse cx="565.7" cy="217.9" rx="2.3" ry="13.9" fill="#60755a" opacity="0.53"/><ellipse cx="543.3" cy="201.5" rx="1.8" ry="14.0" fill="#7c8e70" opacity="0.82"/><ellipse cx="535.6" cy="203.4" rx="2.0" ry="9.0" fill="#98a78c" opacity="0.74"/><ellipse cx="564.7" cy="202.9" rx="3.3" ry="7.9" fill="#60755a" opacity="0.79"/><ellipse cx="545.7" cy="175.5" rx="2.6" ry="7.2" fill="#a4b298" opacity="0.79"/><ellipse cx="546.6" cy="197.4" rx="3.4" ry="15.0" fill="#3a4e38" opacity="0.80"/><ellipse cx="542.9" cy="175.3" rx="2.5" ry="8.7" fill="#3a4e38" opacity="0.46"/><ellipse cx="548.4" cy="194.5" rx="1.8" ry="13.8" fill="#6e8264" opacity="0.60"/><ellipse cx="555.9" cy="171.0" rx="3.4" ry="9.9" fill="#98a78c" opacity="0.60"/><ellipse cx="567.9" cy="221.1" rx="2.0" ry="9.7" fill="#6e8264" opacity="0.67"/><ellipse cx="554.3" cy="174.3" rx="2.3" ry="12.1" fill="#6e8264" opacity="0.45"/><ellipse cx="560.6" cy="198.3" rx="2.8" ry="10.7" fill="#8e9f80" opacity="0.69"/><ellipse cx="533.8" cy="207.7" rx="2.0" ry="10.8" fill="#6e8264" opacity="0.61"/><ellipse cx="551.4" cy="200.9" rx="2.0" ry="11.6" fill="#98a78c" opacity="0.54"/><ellipse cx="562.9" cy="188.2" rx="2.9" ry="7.5" fill="#98a78c" opacity="0.46"/><ellipse cx="556.8" cy="201.8" rx="2.3" ry="14.4" fill="#8e9f80" opacity="0.73"/><ellipse cx="555.6" cy="201.0" rx="3.4" ry="6.6" fill="#8a9a7e" opacity="0.82"/><ellipse cx="537.0" cy="204.2" rx="2.0" ry="8.6" fill="#60755a" opacity="0.79"/><ellipse cx="547.0" cy="166.5" rx="2.8" ry="6.3" fill="#a0ae92" opacity="0.45"/><ellipse cx="556.2" cy="212.5" rx="1.8" ry="9.5" fill="#465a42" opacity="0.67"/><ellipse cx="566.4" cy="179.9" rx="1.7" ry="12.7" fill="#7c8e70" opacity="0.80"/><ellipse cx="554.8" cy="195.0" rx="3.2" ry="12.8" fill="#7c8e70" opacity="0.53"/><ellipse cx="564.3" cy="198.7" rx="2.4" ry="6.1" fill="#60755a" opacity="0.78"/><ellipse cx="551.7" cy="216.2" rx="1.8" ry="8.7" fill="#324632" opacity="0.46"/><ellipse cx="557.1" cy="201.6" rx="3.5" ry="13.9" fill="#465a42" opacity="0.43"/><ellipse cx="557.2" cy="184.8" rx="2.1" ry="15.6" fill="#60755a" opacity="0.82"/><ellipse cx="560.3" cy="212.8" rx="1.7" ry="7.2" fill="#6e8264" opacity="0.58"/><ellipse cx="534.4" cy="205.4" rx="1.8" ry="7.5" fill="#a4b298" opacity="0.44"/><ellipse cx="540.9" cy="171.8" rx="2.8" ry="9.1" fill="#adb9a0" opacity="0.80"/><ellipse cx="540.2" cy="164.5" rx="3.3" ry="10.8" fill="#a0ae92" opacity="0.47"/><ellipse cx="535.9" cy="215.4" rx="3.0" ry="11.7" fill="#5a6e52" opacity="0.50"/><ellipse cx="550.2" cy="196.8" rx="1.6" ry="15.4" fill="#7c8e70" opacity="0.72"/><ellipse cx="549.3" cy="163.3" rx="2.6" ry="15.8" fill="#98a78c" opacity="0.61"/><ellipse cx="569.7" cy="208.3" rx="1.9" ry="6.5" fill="#324632" opacity="0.48"/></g>
<g filter="url(#b1)"><ellipse cx="120.8" cy="161.6" rx="3.3" ry="4.3" fill="#a6b398" opacity="0.78"/><ellipse cx="102.8" cy="161.4" rx="3.4" ry="2.5" fill="#a6b398" opacity="0.42"/><ellipse cx="102.2" cy="165.9" rx="4.9" ry="4.4" fill="#a6b398" opacity="0.50"/><ellipse cx="203.9" cy="164.0" rx="3.6" ry="2.9" fill="#a6b398" opacity="0.47"/><ellipse cx="126.0" cy="163.7" rx="3.8" ry="2.8" fill="#a6b398" opacity="0.50"/><ellipse cx="163.5" cy="166.4" rx="4.8" ry="2.7" fill="#a6b398" opacity="0.43"/><ellipse cx="124.2" cy="159.7" rx="2.7" ry="3.3" fill="#a6b398" opacity="0.74"/><ellipse cx="118.6" cy="161.8" rx="2.2" ry="2.7" fill="#a6b398" opacity="0.64"/><ellipse cx="62.0" cy="184.4" rx="3.5" ry="3.6" fill="#a6b398" opacity="0.79"/><ellipse cx="200.5" cy="164.2" rx="4.3" ry="3.3" fill="#a6b398" opacity="0.49"/><ellipse cx="236.1" cy="176.6" rx="4.3" ry="2.4" fill="#a6b398" opacity="0.50"/><ellipse cx="113.8" cy="166.0" rx="2.8" ry="4.1" fill="#a6b398" opacity="0.46"/><ellipse cx="71.4" cy="181.5" rx="2.1" ry="3.2" fill="#a6b398" opacity="0.63"/><ellipse cx="233.7" cy="169.8" rx="4.7" ry="3.8" fill="#a6b398" opacity="0.65"/><ellipse cx="169.5" cy="165.0" rx="3.6" ry="3.9" fill="#a6b398" opacity="0.61"/><ellipse cx="188.0" cy="164.7" rx="2.3" ry="2.2" fill="#a6b398" opacity="0.68"/><ellipse cx="227.3" cy="168.6" rx="4.8" ry="4.4" fill="#a6b398" opacity="0.52"/><ellipse cx="117.2" cy="162.5" rx="3.7" ry="4.3" fill="#a6b398" opacity="0.60"/><ellipse cx="5.8" cy="187.5" rx="2.2" ry="4.2" fill="#a6b398" opacity="0.62"/><ellipse cx="60.6" cy="187.1" rx="3.5" ry="3.0" fill="#a6b398" opacity="0.61"/><ellipse cx="107.3" cy="163.1" rx="2.4" ry="3.9" fill="#a6b398" opacity="0.70"/><ellipse cx="165.8" cy="161.1" rx="3.0" ry="3.9" fill="#a6b398" opacity="0.47"/><ellipse cx="159.2" cy="164.3" rx="2.5" ry="3.9" fill="#a6b398" opacity="0.52"/><ellipse cx="78.4" cy="172.3" rx="2.9" ry="2.2" fill="#a6b398" opacity="0.58"/><ellipse cx="11.5" cy="183.1" rx="2.9" ry="2.4" fill="#a6b398" opacity="0.61"/><ellipse cx="210.4" cy="167.5" rx="4.2" ry="4.7" fill="#a6b398" opacity="0.64"/><ellipse cx="198.5" cy="163.2" rx="3.3" ry="4.5" fill="#a6b398" opacity="0.70"/><ellipse cx="208.1" cy="168.4" rx="4.3" ry="2.3" fill="#a6b398" opacity="0.46"/><ellipse cx="43.2" cy="192.9" rx="3.9" ry="3.8" fill="#a6b398" opacity="0.44"/><ellipse cx="82.6" cy="170.2" rx="3.5" ry="3.1" fill="#a6b398" opacity="0.76"/><ellipse cx="53.4" cy="188.7" rx="3.9" ry="4.0" fill="#a6b398" opacity="0.70"/><ellipse cx="46.3" cy="191.5" rx="4.0" ry="3.3" fill="#a6b398" opacity="0.42"/><ellipse cx="17.2" cy="184.4" rx="3.6" ry="3.8" fill="#a6b398" opacity="0.63"/><ellipse cx="131.4" cy="163.6" rx="4.9" ry="2.6" fill="#a6b398" opacity="0.66"/><ellipse cx="152.1" cy="161.2" rx="4.0" ry="3.3" fill="#a6b398" opacity="0.68"/><ellipse cx="210.7" cy="165.6" rx="3.8" ry="3.9" fill="#a6b398" opacity="0.55"/><ellipse cx="104.8" cy="166.4" rx="2.3" ry="2.0" fill="#a6b398" opacity="0.74"/><ellipse cx="219.1" cy="161.0" rx="2.9" ry="4.5" fill="#a6b398" opacity="0.62"/><ellipse cx="85.8" cy="172.8" rx="2.1" ry="4.3" fill="#a6b398" opacity="0.72"/><ellipse cx="123.4" cy="164.4" rx="4.6" ry="4.9" fill="#a6b398" opacity="0.68"/><ellipse cx="289.7" cy="119.5" rx="3.7" ry="4.8" fill="#a6b398" opacity="0.62"/><ellipse cx="504.5" cy="116.5" rx="2.7" ry="3.1" fill="#a6b398" opacity="0.43"/><ellipse cx="309.9" cy="109.2" rx="4.4" ry="2.2" fill="#a6b398" opacity="0.67"/><ellipse cx="424.4" cy="105.1" rx="2.6" ry="3.0" fill="#a6b398" opacity="0.58"/><ellipse cx="467.1" cy="103.5" rx="4.5" ry="4.8" fill="#a6b398" opacity="0.48"/><ellipse cx="354.7" cy="106.8" rx="2.3" ry="4.5" fill="#a6b398" opacity="0.42"/><ellipse cx="386.8" cy="100.9" rx="2.3" ry="4.9" fill="#a6b398" opacity="0.77"/><ellipse cx="263.6" cy="140.6" rx="3.0" ry="3.6" fill="#a6b398" opacity="0.44"/><ellipse cx="492.1" cy="107.5" rx="4.8" ry="2.7" fill="#a6b398" opacity="0.58"/><ellipse cx="507.1" cy="114.6" rx="3.8" ry="3.0" fill="#a6b398" opacity="0.43"/><ellipse cx="365.5" cy="105.4" rx="2.1" ry="2.9" fill="#a6b398" opacity="0.77"/><ellipse cx="478.9" cy="106.7" rx="2.2" ry="4.6" fill="#a6b398" opacity="0.57"/><ellipse cx="364.4" cy="103.3" rx="3.8" ry="3.3" fill="#a6b398" opacity="0.60"/><ellipse cx="469.7" cy="105.1" rx="2.8" ry="2.9" fill="#a6b398" opacity="0.77"/><ellipse cx="401.2" cy="104.6" rx="3.4" ry="2.1" fill="#a6b398" opacity="0.63"/><ellipse cx="476.0" cy="105.4" rx="3.9" ry="2.0" fill="#a6b398" opacity="0.70"/><ellipse cx="290.6" cy="117.3" rx="4.4" ry="3.8" fill="#a6b398" opacity="0.69"/><ellipse cx="253.3" cy="155.5" rx="3.6" ry="2.5" fill="#a6b398" opacity="0.57"/><ellipse cx="361.5" cy="106.8" rx="4.0" ry="2.3" fill="#a6b398" opacity="0.55"/><ellipse cx="323.2" cy="110.6" rx="4.9" ry="4.1" fill="#a6b398" opacity="0.72"/><ellipse cx="286.1" cy="120.3" rx="4.9" ry="4.7" fill="#a6b398" opacity="0.73"/><ellipse cx="394.6" cy="106.1" rx="4.8" ry="4.5" fill="#a6b398" opacity="0.73"/><ellipse cx="400.7" cy="105.6" rx="4.7" ry="3.8" fill="#a6b398" opacity="0.45"/><ellipse cx="247.1" cy="172.0" rx="4.7" ry="2.8" fill="#a6b398" opacity="0.76"/><ellipse cx="465.4" cy="102.5" rx="3.9" ry="4.5" fill="#a6b398" opacity="0.57"/><ellipse cx="340.2" cy="108.1" rx="3.1" ry="4.1" fill="#a6b398" opacity="0.71"/><ellipse cx="523.6" cy="135.6" rx="3.4" ry="4.8" fill="#a6b398" opacity="0.64"/><ellipse cx="448.2" cy="103.5" rx="3.3" ry="2.7" fill="#a6b398" opacity="0.47"/><ellipse cx="413.1" cy="102.8" rx="3.4" ry="4.4" fill="#a6b398" opacity="0.45"/><ellipse cx="405.3" cy="105.4" rx="2.5" ry="3.2" fill="#a6b398" opacity="0.61"/><ellipse cx="397.2" cy="101.9" rx="2.9" ry="2.1" fill="#a6b398" opacity="0.69"/><ellipse cx="493.6" cy="109.5" rx="4.1" ry="2.6" fill="#a6b398" opacity="0.77"/><ellipse cx="384.8" cy="105.3" rx="4.0" ry="2.9" fill="#a6b398" opacity="0.66"/><ellipse cx="282.6" cy="126.3" rx="5.0" ry="4.9" fill="#a6b398" opacity="0.78"/><ellipse cx="435.9" cy="101.6" rx="2.4" ry="2.2" fill="#a6b398" opacity="0.75"/><ellipse cx="403.9" cy="105.4" rx="2.8" ry="4.7" fill="#a6b398" opacity="0.63"/><ellipse cx="282.1" cy="123.0" rx="4.7" ry="4.3" fill="#a6b398" opacity="0.78"/><ellipse cx="419.8" cy="105.8" rx="4.2" ry="2.4" fill="#a6b398" opacity="0.50"/><ellipse cx="520.8" cy="130.3" rx="4.2" ry="2.3" fill="#a6b398" opacity="0.41"/><ellipse cx="448.4" cy="105.6" rx="4.0" ry="3.0" fill="#a6b398" opacity="0.67"/><ellipse cx="500.9" cy="116.0" rx="4.2" ry="2.2" fill="#a6b398" opacity="0.56"/><ellipse cx="393.4" cy="104.3" rx="2.1" ry="3.8" fill="#a6b398" opacity="0.67"/><ellipse cx="492.8" cy="107.1" rx="3.0" ry="3.3" fill="#a6b398" opacity="0.42"/><ellipse cx="530.7" cy="152.5" rx="3.1" ry="4.1" fill="#a6b398" opacity="0.56"/><ellipse cx="518.5" cy="127.3" rx="3.3" ry="4.5" fill="#a6b398" opacity="0.69"/><ellipse cx="290.3" cy="121.9" rx="4.8" ry="4.5" fill="#a6b398" opacity="0.45"/><ellipse cx="525.8" cy="142.5" rx="3.8" ry="2.4" fill="#a6b398" opacity="0.72"/><ellipse cx="439.3" cy="104.3" rx="2.5" ry="2.9" fill="#a6b398" opacity="0.47"/><ellipse cx="269.1" cy="135.7" rx="3.0" ry="5.0" fill="#a6b398" opacity="0.74"/><ellipse cx="404.4" cy="103.0" rx="3.4" ry="3.5" fill="#a6b398" opacity="0.43"/><ellipse cx="512.2" cy="124.1" rx="3.4" ry="4.3" fill="#a6b398" opacity="0.64"/><ellipse cx="419.6" cy="102.5" rx="4.5" ry="3.1" fill="#a6b398" opacity="0.42"/><ellipse cx="432.0" cy="104.3" rx="3.5" ry="3.5" fill="#a6b398" opacity="0.48"/><ellipse cx="255.0" cy="155.6" rx="2.6" ry="4.7" fill="#a6b398" opacity="0.65"/><ellipse cx="450.5" cy="107.2" rx="4.8" ry="2.2" fill="#a6b398" opacity="0.63"/><ellipse cx="336.7" cy="104.0" rx="4.6" ry="3.7" fill="#a6b398" opacity="0.70"/><ellipse cx="460.8" cy="102.1" rx="3.5" ry="3.1" fill="#a6b398" opacity="0.42"/><ellipse cx="425.3" cy="107.5" rx="3.7" ry="2.9" fill="#a6b398" opacity="0.53"/><ellipse cx="396.8" cy="103.4" rx="4.1" ry="3.0" fill="#a6b398" opacity="0.74"/><ellipse cx="422.3" cy="106.6" rx="3.1" ry="3.2" fill="#a6b398" opacity="0.76"/><ellipse cx="571.9" cy="155.4" rx="4.4" ry="5.0" fill="#a6b398" opacity="0.45"/><ellipse cx="544.4" cy="157.7" rx="3.0" ry="2.7" fill="#a6b398" opacity="0.44"/><ellipse cx="566.7" cy="155.9" rx="3.9" ry="4.5" fill="#a6b398" opacity="0.44"/><ellipse cx="549.8" cy="156.0" rx="3.1" ry="2.9" fill="#a6b398" opacity="0.79"/><ellipse cx="533.6" cy="170.0" rx="4.5" ry="4.2" fill="#a6b398" opacity="0.41"/><ellipse cx="535.1" cy="164.9" rx="3.4" ry="3.3" fill="#a6b398" opacity="0.74"/><ellipse cx="573.0" cy="153.7" rx="2.6" ry="4.2" fill="#a6b398" opacity="0.69"/><ellipse cx="569.8" cy="153.7" rx="3.8" ry="4.4" fill="#a6b398" opacity="0.59"/></g>
<g filter="url(#b2)"><rect x="0" y="234" width="62" height="36" fill="#4f6340" opacity=".8"/><ellipse cx="7" cy="238" rx="7" ry="7" fill="#a8b66a"/><ellipse cx="29" cy="230" rx="11" ry="8" fill="#a9b86c"/><ellipse cx="59" cy="237" rx="9" ry="7" fill="#9fb068"/>
<rect x="27" y="256" width="17" height="15" fill="#27352a"/>
<rect x="81" y="230" width="450" height="42" fill="#465a3a" opacity=".6"/></g>
<g filter="url(#b1)"><path d="M539,267 q2,-30 -4,-52 l8,-3 q6,24 5,55z" fill="#8c7f78"/><rect x="531" y="209" width="18" height="9" fill="#5f6352"/></g>
<polygon points="0,272 71,269 241,271 574,267 574,382 0,382" fill="url(#grass)" />
<g filter="url(#b1)"><rect x="0" y="267" width="78" height="19" fill="#a3b772" opacity=".85"/><rect x="0" y="287.5" width="74" height="6.5" fill="#d8dbcd"/><rect x="77" y="287.5" width="70" height="5" fill="#c9ceb9" opacity=".5"/></g>
<g filter="url(#b1)"><ellipse cx="294.2" cy="353.6" rx="17" ry="2.3" fill="#85994a" opacity="0.20"/><ellipse cx="455.3" cy="298.3" rx="14" ry="2.1" fill="#98ab5c" opacity="0.21"/><ellipse cx="401.8" cy="296.4" rx="6" ry="2.1" fill="#adbe74" opacity="0.50"/><ellipse cx="188.4" cy="308.5" rx="11" ry="2.7" fill="#8a9e4e" opacity="0.37"/><ellipse cx="237.4" cy="339.3" rx="20" ry="2.6" fill="#a8ba6e" opacity="0.29"/><ellipse cx="49.2" cy="327.8" rx="9" ry="1.2" fill="#85994a" opacity="0.49"/><ellipse cx="431.4" cy="379.4" rx="14" ry="2.1" fill="#adbe74" opacity="0.47"/><ellipse cx="405.2" cy="322.4" rx="21" ry="1.8" fill="#8a9e4e" opacity="0.27"/><ellipse cx="127.0" cy="306.0" rx="9" ry="2.4" fill="#a2b566" opacity="0.32"/><ellipse cx="314.5" cy="370.5" rx="19" ry="2.3" fill="#a8ba6e" opacity="0.23"/><ellipse cx="17.0" cy="346.6" rx="7" ry="2.6" fill="#adbe74" opacity="0.27"/><ellipse cx="394.4" cy="366.3" rx="9" ry="1.8" fill="#98ab5c" opacity="0.35"/><ellipse cx="284.9" cy="302.4" rx="15" ry="1.3" fill="#85994a" opacity="0.31"/><ellipse cx="522.4" cy="298.9" rx="17" ry="1.2" fill="#a8ba6e" opacity="0.48"/><ellipse cx="498.2" cy="369.3" rx="9" ry="2.1" fill="#a2b566" opacity="0.38"/><ellipse cx="377.7" cy="301.5" rx="11" ry="1.5" fill="#adbe74" opacity="0.23"/><ellipse cx="424.4" cy="331.7" rx="10" ry="2.0" fill="#a2b566" opacity="0.44"/><ellipse cx="2.1" cy="341.8" rx="10" ry="2.1" fill="#adbe74" opacity="0.24"/><ellipse cx="278.8" cy="379.1" rx="14" ry="1.8" fill="#a2b566" opacity="0.37"/><ellipse cx="51.4" cy="354.1" rx="20" ry="2.3" fill="#8a9e4e" opacity="0.22"/><ellipse cx="362.3" cy="333.7" rx="12" ry="3.2" fill="#98ab5c" opacity="0.25"/><ellipse cx="416.7" cy="375.9" rx="22" ry="1.7" fill="#85994a" opacity="0.34"/><ellipse cx="198.8" cy="367.6" rx="13" ry="3.1" fill="#8a9e4e" opacity="0.20"/><ellipse cx="162.7" cy="295.1" rx="16" ry="2.8" fill="#a8ba6e" opacity="0.45"/><ellipse cx="78.7" cy="319.8" rx="12" ry="2.2" fill="#85994a" opacity="0.39"/><ellipse cx="91.6" cy="371.2" rx="14" ry="3.0" fill="#98ab5c" opacity="0.45"/><ellipse cx="475.9" cy="363.9" rx="11" ry="1.6" fill="#85994a" opacity="0.33"/><ellipse cx="263.3" cy="331.7" rx="11" ry="2.1" fill="#85994a" opacity="0.46"/><ellipse cx="556.1" cy="359.6" rx="11" ry="2.3" fill="#a8ba6e" opacity="0.50"/><ellipse cx="509.9" cy="343.2" rx="8" ry="2.3" fill="#adbe74" opacity="0.22"/><ellipse cx="264.9" cy="300.1" rx="14" ry="1.6" fill="#8a9e4e" opacity="0.23"/><ellipse cx="217.2" cy="337.4" rx="21" ry="1.4" fill="#a2b566" opacity="0.39"/><ellipse cx="472.6" cy="352.8" rx="7" ry="1.4" fill="#98ab5c" opacity="0.22"/><ellipse cx="243.9" cy="305.1" rx="16" ry="2.9" fill="#a2b566" opacity="0.37"/><ellipse cx="91.6" cy="317.3" rx="15" ry="2.5" fill="#adbe74" opacity="0.39"/><ellipse cx="27.6" cy="310.6" rx="8" ry="2.7" fill="#8a9e4e" opacity="0.24"/><ellipse cx="38.2" cy="307.0" rx="15" ry="2.0" fill="#85994a" opacity="0.48"/><ellipse cx="118.6" cy="311.0" rx="13" ry="1.4" fill="#a2b566" opacity="0.45"/><ellipse cx="229.9" cy="349.9" rx="15" ry="1.7" fill="#a8ba6e" opacity="0.38"/><ellipse cx="523.4" cy="358.7" rx="18" ry="2.3" fill="#a8ba6e" opacity="0.28"/><ellipse cx="113.2" cy="358.4" rx="9" ry="2.3" fill="#98ab5c" opacity="0.25"/><ellipse cx="319.5" cy="295.3" rx="7" ry="2.7" fill="#98ab5c" opacity="0.43"/><ellipse cx="334.2" cy="314.8" rx="8" ry="2.8" fill="#a2b566" opacity="0.24"/><ellipse cx="433.3" cy="317.0" rx="20" ry="1.2" fill="#a8ba6e" opacity="0.39"/><ellipse cx="416.5" cy="308.2" rx="21" ry="2.4" fill="#adbe74" opacity="0.37"/><ellipse cx="185.9" cy="326.4" rx="11" ry="3.2" fill="#adbe74" opacity="0.32"/><ellipse cx="95.4" cy="369.8" rx="6" ry="1.9" fill="#98ab5c" opacity="0.33"/><ellipse cx="485.9" cy="341.1" rx="20" ry="2.8" fill="#adbe74" opacity="0.21"/><ellipse cx="98.6" cy="362.2" rx="10" ry="1.4" fill="#adbe74" opacity="0.33"/><ellipse cx="508.9" cy="376.3" rx="6" ry="2.0" fill="#a8ba6e" opacity="0.48"/><ellipse cx="270.5" cy="377.2" rx="7" ry="1.7" fill="#adbe74" opacity="0.28"/><ellipse cx="116.6" cy="310.0" rx="9" ry="2.6" fill="#a2b566" opacity="0.38"/><ellipse cx="392.9" cy="363.0" rx="14" ry="1.5" fill="#8a9e4e" opacity="0.35"/><ellipse cx="301.4" cy="339.3" rx="18" ry="2.4" fill="#a8ba6e" opacity="0.49"/><ellipse cx="353.7" cy="341.3" rx="11" ry="1.9" fill="#85994a" opacity="0.33"/><ellipse cx="421.6" cy="356.3" rx="12" ry="1.5" fill="#85994a" opacity="0.35"/><ellipse cx="297.7" cy="322.8" rx="12" ry="1.4" fill="#85994a" opacity="0.21"/><ellipse cx="339.4" cy="356.2" rx="10" ry="2.7" fill="#adbe74" opacity="0.50"/><ellipse cx="279.1" cy="366.7" rx="15" ry="2.5" fill="#98ab5c" opacity="0.37"/><ellipse cx="52.0" cy="352.4" rx="7" ry="2.2" fill="#98ab5c" opacity="0.42"/><ellipse cx="427.2" cy="327.5" rx="12" ry="1.5" fill="#adbe74" opacity="0.47"/><ellipse cx="101.7" cy="355.7" rx="15" ry="1.6" fill="#85994a" opacity="0.29"/><ellipse cx="373.8" cy="332.8" rx="22" ry="3.0" fill="#adbe74" opacity="0.33"/><ellipse cx="366.0" cy="333.5" rx="20" ry="1.9" fill="#85994a" opacity="0.29"/><ellipse cx="450.7" cy="347.0" rx="19" ry="1.2" fill="#8a9e4e" opacity="0.37"/><ellipse cx="243.8" cy="309.6" rx="17" ry="1.9" fill="#adbe74" opacity="0.35"/><ellipse cx="338.4" cy="373.9" rx="14" ry="1.8" fill="#85994a" opacity="0.25"/><ellipse cx="133.0" cy="331.5" rx="12" ry="3.0" fill="#8a9e4e" opacity="0.34"/><ellipse cx="366.2" cy="348.9" rx="10" ry="3.2" fill="#85994a" opacity="0.36"/><ellipse cx="192.3" cy="315.4" rx="22" ry="2.2" fill="#98ab5c" opacity="0.50"/><ellipse cx="348.8" cy="347.8" rx="20" ry="2.1" fill="#8a9e4e" opacity="0.32"/><ellipse cx="331.5" cy="339.0" rx="13" ry="1.7" fill="#adbe74" opacity="0.25"/><ellipse cx="111.5" cy="324.4" rx="6" ry="1.3" fill="#a2b566" opacity="0.45"/><ellipse cx="158.2" cy="295.6" rx="21" ry="1.4" fill="#85994a" opacity="0.34"/><ellipse cx="552.3" cy="321.8" rx="7" ry="1.8" fill="#98ab5c" opacity="0.35"/><ellipse cx="556.0" cy="350.0" rx="15" ry="3.0" fill="#85994a" opacity="0.40"/><ellipse cx="137.7" cy="325.8" rx="18" ry="2.0" fill="#8a9e4e" opacity="0.33"/><ellipse cx="128.7" cy="306.9" rx="10" ry="2.4" fill="#8a9e4e" opacity="0.23"/><ellipse cx="138.5" cy="309.5" rx="12" ry="1.4" fill="#adbe74" opacity="0.20"/><ellipse cx="534.7" cy="316.2" rx="11" ry="3.2" fill="#a2b566" opacity="0.34"/><ellipse cx="292.5" cy="308.6" rx="18" ry="3.2" fill="#a2b566" opacity="0.46"/><ellipse cx="63.0" cy="296.8" rx="9" ry="1.7" fill="#a2b566" opacity="0.43"/><ellipse cx="256.2" cy="306.0" rx="20" ry="2.3" fill="#98ab5c" opacity="0.27"/><ellipse cx="411.7" cy="310.5" rx="19" ry="1.7" fill="#8a9e4e" opacity="0.43"/><ellipse cx="59.5" cy="304.3" rx="10" ry="2.4" fill="#adbe74" opacity="0.28"/><ellipse cx="4.4" cy="325.6" rx="21" ry="2.1" fill="#98ab5c" opacity="0.43"/><ellipse cx="282.5" cy="328.1" rx="12" ry="2.7" fill="#a2b566" opacity="0.30"/><ellipse cx="233.8" cy="299.0" rx="20" ry="1.6" fill="#a8ba6e" opacity="0.31"/><ellipse cx="454.0" cy="319.4" rx="13" ry="2.4" fill="#85994a" opacity="0.46"/><ellipse cx="10.1" cy="321.1" rx="13" ry="2.6" fill="#adbe74" opacity="0.33"/><ellipse cx="449.8" cy="341.5" rx="14" ry="2.4" fill="#a2b566" opacity="0.43"/><ellipse cx="246.3" cy="345.4" rx="18" ry="1.5" fill="#a2b566" opacity="0.39"/><ellipse cx="67.9" cy="312.5" rx="18" ry="1.5" fill="#85994a" opacity="0.37"/><ellipse cx="173.6" cy="357.1" rx="14" ry="1.5" fill="#98ab5c" opacity="0.36"/><ellipse cx="268.9" cy="332.7" rx="18" ry="2.7" fill="#a2b566" opacity="0.27"/><ellipse cx="291.7" cy="363.4" rx="9" ry="2.2" fill="#adbe74" opacity="0.27"/><ellipse cx="441.8" cy="318.3" rx="14" ry="2.0" fill="#adbe74" opacity="0.39"/><ellipse cx="332.2" cy="335.1" rx="19" ry="2.3" fill="#8a9e4e" opacity="0.46"/><ellipse cx="565.9" cy="365.8" rx="20" ry="2.3" fill="#98ab5c" opacity="0.38"/><ellipse cx="39.8" cy="318.3" rx="16" ry="2.3" fill="#98ab5c" opacity="0.38"/><ellipse cx="246.4" cy="314.1" rx="20" ry="1.2" fill="#a8ba6e" opacity="0.24"/><ellipse cx="268.3" cy="337.6" rx="13" ry="2.5" fill="#a2b566" opacity="0.43"/><ellipse cx="440.7" cy="364.2" rx="15" ry="2.0" fill="#98ab5c" opacity="0.40"/><ellipse cx="296.0" cy="317.9" rx="19" ry="2.0" fill="#85994a" opacity="0.37"/><ellipse cx="298.3" cy="325.0" rx="19" ry="2.5" fill="#a2b566" opacity="0.36"/><ellipse cx="451.1" cy="299.6" rx="19" ry="1.8" fill="#a2b566" opacity="0.21"/><ellipse cx="505.4" cy="299.0" rx="12" ry="2.5" fill="#a8ba6e" opacity="0.36"/><ellipse cx="355.6" cy="376.8" rx="20" ry="2.7" fill="#adbe74" opacity="0.27"/><ellipse cx="191.2" cy="358.1" rx="17" ry="1.5" fill="#98ab5c" opacity="0.28"/><ellipse cx="33.6" cy="344.1" rx="17" ry="2.4" fill="#adbe74" opacity="0.34"/><ellipse cx="217.8" cy="299.0" rx="20" ry="1.6" fill="#adbe74" opacity="0.29"/><ellipse cx="316.5" cy="345.7" rx="17" ry="1.3" fill="#a8ba6e" opacity="0.48"/><ellipse cx="268.3" cy="311.1" rx="16" ry="2.9" fill="#adbe74" opacity="0.37"/><ellipse cx="146.7" cy="334.4" rx="7" ry="2.3" fill="#8a9e4e" opacity="0.33"/><ellipse cx="429.6" cy="309.8" rx="6" ry="2.3" fill="#8a9e4e" opacity="0.42"/><ellipse cx="231.1" cy="372.4" rx="12" ry="1.9" fill="#adbe74" opacity="0.40"/><ellipse cx="568.6" cy="358.5" rx="10" ry="3.1" fill="#98ab5c" opacity="0.40"/><ellipse cx="102.4" cy="357.4" rx="11" ry="1.9" fill="#85994a" opacity="0.27"/><ellipse cx="173.9" cy="314.4" rx="12" ry="1.4" fill="#85994a" opacity="0.44"/><ellipse cx="203.1" cy="355.7" rx="21" ry="1.6" fill="#8a9e4e" opacity="0.23"/><ellipse cx="284.6" cy="316.8" rx="21" ry="2.0" fill="#8a9e4e" opacity="0.38"/><ellipse cx="39.7" cy="325.1" rx="12" ry="1.9" fill="#a8ba6e" opacity="0.49"/><ellipse cx="280.3" cy="363.0" rx="14" ry="2.9" fill="#a2b566" opacity="0.39"/><ellipse cx="84.8" cy="351.6" rx="17" ry="1.5" fill="#85994a" opacity="0.37"/><ellipse cx="428.3" cy="314.4" rx="11" ry="3.1" fill="#adbe74" opacity="0.30"/><ellipse cx="139.4" cy="340.1" rx="17" ry="3.0" fill="#98ab5c" opacity="0.45"/><ellipse cx="363.3" cy="361.7" rx="17" ry="2.9" fill="#98ab5c" opacity="0.39"/><ellipse cx="360.1" cy="326.1" rx="9" ry="1.8" fill="#85994a" opacity="0.23"/><ellipse cx="15.0" cy="339.2" rx="17" ry="3.0" fill="#85994a" opacity="0.35"/><ellipse cx="305.9" cy="352.5" rx="11" ry="2.8" fill="#85994a" opacity="0.35"/><ellipse cx="300.4" cy="325.9" rx="17" ry="1.3" fill="#a2b566" opacity="0.26"/><ellipse cx="552.5" cy="350.6" rx="15" ry="1.5" fill="#adbe74" opacity="0.22"/><ellipse cx="537.0" cy="375.6" rx="15" ry="2.7" fill="#8a9e4e" opacity="0.38"/><ellipse cx="274.1" cy="308.1" rx="13" ry="3.2" fill="#98ab5c" opacity="0.36"/><ellipse cx="4.4" cy="343.2" rx="14" ry="1.8" fill="#8a9e4e" opacity="0.43"/><ellipse cx="298.8" cy="318.6" rx="13" ry="1.9" fill="#8a9e4e" opacity="0.41"/><ellipse cx="221.5" cy="361.8" rx="15" ry="3.1" fill="#a8ba6e" opacity="0.36"/><ellipse cx="391.2" cy="302.2" rx="19" ry="2.5" fill="#8a9e4e" opacity="0.23"/><ellipse cx="518.3" cy="332.5" rx="9" ry="2.2" fill="#98ab5c" opacity="0.33"/><ellipse cx="302.0" cy="297.8" rx="18" ry="2.4" fill="#85994a" opacity="0.49"/><ellipse cx="556.4" cy="360.7" rx="18" ry="2.7" fill="#a8ba6e" opacity="0.49"/><ellipse cx="222.5" cy="327.8" rx="6" ry="2.1" fill="#8a9e4e" opacity="0.28"/><ellipse cx="319.6" cy="357.5" rx="14" ry="2.6" fill="#a2b566" opacity="0.22"/><ellipse cx="378.6" cy="374.8" rx="19" ry="1.8" fill="#adbe74" opacity="0.21"/><ellipse cx="514.3" cy="320.8" rx="14" ry="1.3" fill="#8a9e4e" opacity="0.38"/><ellipse cx="476.8" cy="350.3" rx="14" ry="1.4" fill="#85994a" opacity="0.46"/><ellipse cx="98.9" cy="311.5" rx="10" ry="1.6" fill="#8a9e4e" opacity="0.25"/><ellipse cx="23.6" cy="349.8" rx="9" ry="2.7" fill="#98ab5c" opacity="0.40"/><ellipse cx="532.4" cy="305.6" rx="16" ry="2.1" fill="#a2b566" opacity="0.42"/><ellipse cx="425.0" cy="320.1" rx="11" ry="1.4" fill="#a2b566" opacity="0.41"/><ellipse cx="32.4" cy="309.2" rx="9" ry="2.8" fill="#a8ba6e" opacity="0.39"/><ellipse cx="365.4" cy="299.6" rx="18" ry="2.3" fill="#a8ba6e" opacity="0.39"/><ellipse cx="219.1" cy="303.8" rx="16" ry="1.7" fill="#98ab5c" opacity="0.22"/><ellipse cx="480.4" cy="367.1" rx="19" ry="2.0" fill="#98ab5c" opacity="0.34"/><ellipse cx="478.1" cy="375.5" rx="18" ry="2.0" fill="#a2b566" opacity="0.27"/><ellipse cx="251.5" cy="307.0" rx="20" ry="3.1" fill="#8a9e4e" opacity="0.47"/><ellipse cx="324.9" cy="300.5" rx="18" ry="2.3" fill="#98ab5c" opacity="0.45"/><ellipse cx="256.5" cy="334.2" rx="13" ry="2.1" fill="#a2b566" opacity="0.39"/><ellipse cx="452.4" cy="344.7" rx="10" ry="3.0" fill="#85994a" opacity="0.46"/><ellipse cx="198.7" cy="295.5" rx="13" ry="3.1" fill="#adbe74" opacity="0.40"/><ellipse cx="541.2" cy="339.3" rx="9" ry="2.5" fill="#85994a" opacity="0.33"/><ellipse cx="124.1" cy="317.2" rx="21" ry="1.8" fill="#a8ba6e" opacity="0.22"/><ellipse cx="543.7" cy="374.6" rx="18" ry="2.9" fill="#98ab5c" opacity="0.44"/><ellipse cx="36.3" cy="317.7" rx="6" ry="2.2" fill="#8a9e4e" opacity="0.46"/><ellipse cx="362.0" cy="324.6" rx="7" ry="1.3" fill="#8a9e4e" opacity="0.38"/><ellipse cx="346.9" cy="340.7" rx="14" ry="2.1" fill="#a2b566" opacity="0.23"/><ellipse cx="73.8" cy="341.9" rx="14" ry="1.9" fill="#adbe74" opacity="0.38"/><ellipse cx="386.9" cy="317.3" rx="13" ry="1.9" fill="#adbe74" opacity="0.49"/><ellipse cx="539.3" cy="337.5" rx="19" ry="2.3" fill="#8a9e4e" opacity="0.47"/><ellipse cx="566.1" cy="362.7" rx="6" ry="1.9" fill="#a8ba6e" opacity="0.24"/></g>
<g filter="url(#b05)"><path d="M238,214 q-2,-22 8,-30 q1,-14 10,-15 q9,1 9,15 q10,10 8,30z" fill="#ecebea"/><ellipse cx="256" cy="175" rx="6" ry="7" fill="#f2f1ef"/></g><g filter="url(#b05)"><clipPath id="mc"><polygon points="41,224 45,215 53,210 63,207 73,204 81,207 86,216 88,226 92,234 94,220 99,210 107,207 115,213 119,217 127,218 133,216 139,207 145,204 155,204 162,208 167,216 173,222 181,225 189,222 193,216 205,215 211,220 217,222 231,222 239,218 245,222 251,208 259,207 263,216 267,224 275,225 279,210 289,207 295,206 299,202 311,202 316,207 319,207 329,207 335,213 341,213 343,228 353,229 357,210 363,204 377,204 381,220 387,220 393,210 399,207 407,210 411,212 423,212 429,208 437,207 444,209 449,214 463,216 469,210 477,207 485,204 493,201 497,200 509,200 515,206 521,216 527,228 523,245 519,260 517,278 511,277 501,275 491,279 479,271 469,277 456,275 446,279 436,275 423,281 409,277 396,283 381,279 369,283 356,277 341,281 329,277 316,281 301,277 289,281 276,277 263,283 249,279 236,283 221,279 209,283 196,279 183,283 169,277 157,270 141,270 133,279 121,283 109,279 96,283 87,275 79,266 59,264 49,255 43,240"/></clipPath><polygon points="41,224 45,215 53,210 63,207 73,204 81,207 86,216 88,226 92,234 94,220 99,210 107,207 115,213 119,217 127,218 133,216 139,207 145,204 155,204 162,208 167,216 173,222 181,225 189,222 193,216 205,215 211,220 217,222 231,222 239,218 245,222 251,208 259,207 263,216 267,224 275,225 279,210 289,207 295,206 299,202 311,202 316,207 319,207 329,207 335,213 341,213 343,228 353,229 357,210 363,204 377,204 381,220 387,220 393,210 399,207 407,210 411,212 423,212 429,208 437,207 444,209 449,214 463,216 469,210 477,207 485,204 493,201 497,200 509,200 515,206 521,216 527,228 523,245 519,260 517,278 511,277 501,275 491,279 479,271 469,277 456,275 446,279 436,275 423,281 409,277 396,283 381,279 369,283 356,277 341,281 329,277 316,281 301,277 289,281 276,277 263,283 249,279 236,283 221,279 209,283 196,279 183,283 169,277 157,270 141,270 133,279 121,283 109,279 96,283 87,275 79,266 59,264 49,255 43,240" fill="#18191d"/><g clip-path="url(#mc)"><line x1="341.8" y1="257.6" x2="345.3" y2="276.7" stroke="#0c0d10" stroke-width="2.8" stroke-linecap="round" opacity="0.71"/><line x1="444.0" y1="259.2" x2="440.4" y2="270.7" stroke="#33353d" stroke-width="1.7" stroke-linecap="round" opacity="0.69"/><line x1="164.9" y1="248.1" x2="161.0" y2="264.1" stroke="#33353d" stroke-width="2.3" stroke-linecap="round" opacity="0.57"/><line x1="456.7" y1="240.7" x2="453.3" y2="259.4" stroke="#0c0d10" stroke-width="2.7" stroke-linecap="round" opacity="0.55"/><line x1="49.8" y1="263.8" x2="47.6" y2="274.8" stroke="#33353d" stroke-width="3.2" stroke-linecap="round" opacity="0.62"/><line x1="500.9" y1="247.9" x2="498.5" y2="265.4" stroke="#0c0d10" stroke-width="1.9" stroke-linecap="round" opacity="0.89"/><line x1="229.1" y1="223.0" x2="232.6" y2="236.8" stroke="#24262d" stroke-width="1.6" stroke-linecap="round" opacity="0.62"/><line x1="332.5" y1="222.2" x2="331.2" y2="239.7" stroke="#24262d" stroke-width="2.2" stroke-linecap="round" opacity="0.62"/><line x1="376.3" y1="230.9" x2="373.7" y2="245.5" stroke="#24262d" stroke-width="3.5" stroke-linecap="round" opacity="0.51"/><line x1="401.4" y1="262.6" x2="403.7" y2="270.8" stroke="#24262d" stroke-width="2.3" stroke-linecap="round" opacity="0.84"/><line x1="261.8" y1="256.0" x2="265.5" y2="272.7" stroke="#2b2d35" stroke-width="3.0" stroke-linecap="round" opacity="0.87"/><line x1="491.8" y1="238.5" x2="492.0" y2="251.5" stroke="#3a3c44" stroke-width="1.7" stroke-linecap="round" opacity="0.80"/><line x1="423.7" y1="263.3" x2="427.3" y2="271.8" stroke="#2b2d35" stroke-width="1.9" stroke-linecap="round" opacity="0.71"/><line x1="219.4" y1="229.1" x2="221.1" y2="241.0" stroke="#2b2d35" stroke-width="2.1" stroke-linecap="round" opacity="0.63"/><line x1="132.4" y1="225.8" x2="133.9" y2="235.8" stroke="#3a3c44" stroke-width="1.8" stroke-linecap="round" opacity="0.52"/><line x1="512.7" y1="247.6" x2="510.6" y2="261.3" stroke="#0c0d10" stroke-width="2.2" stroke-linecap="round" opacity="0.60"/><line x1="355.0" y1="229.0" x2="356.1" y2="250.7" stroke="#3a3c44" stroke-width="2.2" stroke-linecap="round" opacity="0.58"/><line x1="510.2" y1="249.1" x2="513.4" y2="258.9" stroke="#3a3c44" stroke-width="1.7" stroke-linecap="round" opacity="0.67"/><line x1="119.1" y1="262.5" x2="118.8" y2="274.7" stroke="#0c0d10" stroke-width="3.2" stroke-linecap="round" opacity="0.89"/><line x1="262.2" y1="245.4" x2="262.0" y2="263.6" stroke="#24262d" stroke-width="2.4" stroke-linecap="round" opacity="0.86"/><line x1="101.9" y1="261.5" x2="99.3" y2="276.9" stroke="#3a3c44" stroke-width="3.2" stroke-linecap="round" opacity="0.57"/><line x1="280.2" y1="246.7" x2="280.2" y2="262.4" stroke="#2b2d35" stroke-width="3.1" stroke-linecap="round" opacity="0.81"/><line x1="375.5" y1="253.9" x2="374.4" y2="272.5" stroke="#0c0d10" stroke-width="2.8" stroke-linecap="round" opacity="0.83"/><line x1="173.5" y1="269.1" x2="177.1" y2="287.1" stroke="#24262d" stroke-width="2.8" stroke-linecap="round" opacity="0.73"/><line x1="54.4" y1="248.3" x2="55.8" y2="259.8" stroke="#3a3c44" stroke-width="2.1" stroke-linecap="round" opacity="0.70"/><line x1="365.6" y1="239.1" x2="364.4" y2="250.9" stroke="#3a3c44" stroke-width="2.2" stroke-linecap="round" opacity="0.84"/><line x1="457.9" y1="255.0" x2="461.5" y2="276.7" stroke="#0c0d10" stroke-width="1.8" stroke-linecap="round" opacity="0.89"/><line x1="142.4" y1="239.4" x2="140.6" y2="259.3" stroke="#2b2d35" stroke-width="2.9" stroke-linecap="round" opacity="0.79"/><line x1="129.8" y1="259.5" x2="131.1" y2="275.6" stroke="#3a3c44" stroke-width="2.1" stroke-linecap="round" opacity="0.72"/><line x1="456.6" y1="235.0" x2="454.1" y2="256.9" stroke="#0c0d10" stroke-width="2.4" stroke-linecap="round" opacity="0.76"/><line x1="151.9" y1="254.9" x2="148.3" y2="271.8" stroke="#3a3c44" stroke-width="3.5" stroke-linecap="round" opacity="0.57"/><line x1="468.2" y1="227.3" x2="468.0" y2="248.9" stroke="#0c0d10" stroke-width="1.6" stroke-linecap="round" opacity="0.69"/><line x1="227.7" y1="251.4" x2="225.6" y2="267.6" stroke="#24262d" stroke-width="1.5" stroke-linecap="round" opacity="0.66"/><line x1="179.9" y1="241.7" x2="182.6" y2="251.3" stroke="#24262d" stroke-width="3.4" stroke-linecap="round" opacity="0.72"/><line x1="190.6" y1="236.2" x2="194.3" y2="251.4" stroke="#24262d" stroke-width="3.4" stroke-linecap="round" opacity="0.83"/><line x1="246.0" y1="261.0" x2="244.9" y2="278.0" stroke="#33353d" stroke-width="1.8" stroke-linecap="round" opacity="0.65"/><line x1="273.2" y1="231.6" x2="269.9" y2="241.4" stroke="#0c0d10" stroke-width="1.5" stroke-linecap="round" opacity="0.54"/><line x1="314.9" y1="251.5" x2="316.0" y2="261.5" stroke="#0c0d10" stroke-width="2.3" stroke-linecap="round" opacity="0.67"/><line x1="155.4" y1="236.0" x2="154.4" y2="257.6" stroke="#33353d" stroke-width="2.7" stroke-linecap="round" opacity="0.60"/><line x1="510.1" y1="245.8" x2="508.6" y2="259.6" stroke="#24262d" stroke-width="2.5" stroke-linecap="round" opacity="0.61"/><line x1="273.2" y1="227.9" x2="272.7" y2="244.6" stroke="#24262d" stroke-width="1.6" stroke-linecap="round" opacity="0.55"/><line x1="233.4" y1="245.1" x2="231.4" y2="260.9" stroke="#3a3c44" stroke-width="3.1" stroke-linecap="round" opacity="0.60"/><line x1="174.8" y1="229.4" x2="173.2" y2="251.3" stroke="#0c0d10" stroke-width="3.5" stroke-linecap="round" opacity="0.71"/><line x1="454.8" y1="264.3" x2="451.0" y2="284.8" stroke="#33353d" stroke-width="2.1" stroke-linecap="round" opacity="0.71"/><line x1="207.0" y1="236.2" x2="206.7" y2="251.7" stroke="#24262d" stroke-width="2.9" stroke-linecap="round" opacity="0.83"/><line x1="111.3" y1="222.1" x2="112.8" y2="237.9" stroke="#2b2d35" stroke-width="3.3" stroke-linecap="round" opacity="0.72"/><line x1="55.8" y1="259.4" x2="56.4" y2="273.4" stroke="#0c0d10" stroke-width="3.4" stroke-linecap="round" opacity="0.76"/><line x1="452.6" y1="262.4" x2="454.0" y2="277.0" stroke="#0c0d10" stroke-width="1.9" stroke-linecap="round" opacity="0.62"/><line x1="439.1" y1="225.2" x2="440.7" y2="244.9" stroke="#3a3c44" stroke-width="2.7" stroke-linecap="round" opacity="0.76"/><line x1="271.1" y1="236.9" x2="272.6" y2="247.2" stroke="#3a3c44" stroke-width="3.4" stroke-linecap="round" opacity="0.72"/><line x1="249.0" y1="248.0" x2="250.9" y2="256.7" stroke="#24262d" stroke-width="3.1" stroke-linecap="round" opacity="0.82"/><line x1="360.9" y1="223.2" x2="364.7" y2="241.3" stroke="#3a3c44" stroke-width="2.9" stroke-linecap="round" opacity="0.52"/><line x1="444.8" y1="232.5" x2="448.4" y2="249.6" stroke="#0c0d10" stroke-width="3.3" stroke-linecap="round" opacity="0.90"/><line x1="380.7" y1="243.0" x2="378.2" y2="253.6" stroke="#33353d" stroke-width="1.6" stroke-linecap="round" opacity="0.59"/><line x1="310.1" y1="253.7" x2="308.3" y2="272.1" stroke="#0c0d10" stroke-width="2.7" stroke-linecap="round" opacity="0.80"/><line x1="461.9" y1="228.4" x2="460.4" y2="242.5" stroke="#0c0d10" stroke-width="2.5" stroke-linecap="round" opacity="0.64"/><line x1="357.4" y1="265.9" x2="355.8" y2="275.8" stroke="#0c0d10" stroke-width="2.8" stroke-linecap="round" opacity="0.70"/><line x1="476.9" y1="248.6" x2="475.0" y2="265.3" stroke="#0c0d10" stroke-width="2.0" stroke-linecap="round" opacity="0.83"/><line x1="182.2" y1="268.8" x2="185.1" y2="288.1" stroke="#3a3c44" stroke-width="3.0" stroke-linecap="round" opacity="0.57"/><line x1="384.2" y1="253.4" x2="385.6" y2="262.6" stroke="#2b2d35" stroke-width="3.2" stroke-linecap="round" opacity="0.70"/><line x1="262.1" y1="240.7" x2="265.9" y2="255.2" stroke="#2b2d35" stroke-width="3.1" stroke-linecap="round" opacity="0.51"/><line x1="389.8" y1="224.6" x2="393.4" y2="234.7" stroke="#0c0d10" stroke-width="3.1" stroke-linecap="round" opacity="0.80"/><line x1="88.4" y1="265.7" x2="86.1" y2="280.6" stroke="#0c0d10" stroke-width="2.7" stroke-linecap="round" opacity="0.64"/><line x1="159.5" y1="238.0" x2="158.2" y2="254.6" stroke="#3a3c44" stroke-width="2.3" stroke-linecap="round" opacity="0.79"/><line x1="217.4" y1="236.2" x2="221.1" y2="253.0" stroke="#24262d" stroke-width="2.5" stroke-linecap="round" opacity="0.74"/><line x1="318.4" y1="257.5" x2="315.2" y2="271.1" stroke="#2b2d35" stroke-width="1.9" stroke-linecap="round" opacity="0.58"/><line x1="279.3" y1="267.0" x2="278.1" y2="284.2" stroke="#3a3c44" stroke-width="2.4" stroke-linecap="round" opacity="0.86"/><line x1="340.1" y1="242.6" x2="336.9" y2="257.1" stroke="#33353d" stroke-width="2.8" stroke-linecap="round" opacity="0.53"/><line x1="457.5" y1="263.7" x2="457.9" y2="278.3" stroke="#2b2d35" stroke-width="2.1" stroke-linecap="round" opacity="0.56"/><line x1="183.9" y1="233.3" x2="180.2" y2="248.0" stroke="#24262d" stroke-width="2.1" stroke-linecap="round" opacity="0.52"/></g><rect x="104" y="273" width="3" height="12" rx="1.5" fill="#6e8444"/><rect x="124" y="275" width="4" height="10" rx="1.5" fill="#6e8444"/><rect x="161" y="269" width="6" height="16" rx="1.5" fill="#6e8444"/><rect x="184" y="275" width="4" height="10" rx="1.5" fill="#6e8444"/><rect x="205" y="274" width="4" height="11" rx="1.5" fill="#6e8444"/><rect x="228" y="275" width="4" height="10" rx="1.5" fill="#6e8444"/><rect x="251" y="274" width="4" height="11" rx="1.5" fill="#6e8444"/><rect x="275" y="275" width="4" height="10" rx="1.5" fill="#6e8444"/><rect x="299" y="274" width="4" height="11" rx="1.5" fill="#6e8444"/><rect x="324" y="275" width="5" height="10" rx="1.5" fill="#6e8444"/><rect x="349" y="274" width="4" height="11" rx="1.5" fill="#6e8444"/><rect x="379" y="271" width="5" height="14" rx="1.5" fill="#6e8444"/><rect x="407" y="271" width="6" height="14" rx="1.5" fill="#6e8444"/><rect x="431" y="273" width="8" height="12" rx="1.5" fill="#6e8444"/><rect x="455" y="271" width="4" height="14" rx="1.5" fill="#6e8444"/><rect x="489" y="271" width="5" height="14" rx="1.5" fill="#6e8444"/><rect x="503" y="271" width="5" height="14" rx="1.5" fill="#6e8444"/><line x1="62" y1="262" x2="62" y2="307" stroke="#4a6796" stroke-width="10" stroke-linecap="round"/><line x1="72" y1="262" x2="71" y2="306" stroke="#43608e" stroke-width="9" stroke-linecap="round"/><line x1="93" y1="276" x2="92" y2="298" stroke="#17181c" stroke-width="6" stroke-linecap="round"/><line x1="101" y1="276" x2="102" y2="300" stroke="#17181c" stroke-width="6" stroke-linecap="round"/><line x1="110" y1="276" x2="108" y2="302" stroke="#17181c" stroke-width="7" stroke-linecap="round"/><line x1="118" y1="276" x2="120" y2="300" stroke="#17181c" stroke-width="6" stroke-linecap="round"/><line x1="128" y1="276" x2="127" y2="294" stroke="#17181c" stroke-width="6" stroke-linecap="round"/><line x1="136" y1="276" x2="138" y2="296" stroke="#17181c" stroke-width="6" stroke-linecap="round"/><line x1="144" y1="266" x2="143" y2="296" stroke="#1c222d" stroke-width="8" stroke-linecap="round"/><line x1="153" y1="266" x2="155" y2="296" stroke="#1c222d" stroke-width="8" stroke-linecap="round"/><line x1="167" y1="276" x2="165" y2="300" stroke="#17181c" stroke-width="7" stroke-linecap="round"/><line x1="177" y1="276" x2="179" y2="300" stroke="#17181c" stroke-width="7" stroke-linecap="round"/><line x1="189" y1="276" x2="188" y2="294" stroke="#17181c" stroke-width="6" stroke-linecap="round"/><line x1="199" y1="276" x2="200" y2="296" stroke="#17181c" stroke-width="6" stroke-linecap="round"/><line x1="211" y1="276" x2="209" y2="297" stroke="#17181c" stroke-width="7" stroke-linecap="round"/><line x1="221" y1="276" x2="222" y2="295" stroke="#17181c" stroke-width="6" stroke-linecap="round"/><line x1="234" y1="276" x2="233" y2="293" stroke="#17181c" stroke-width="6" stroke-linecap="round"/><line x1="245" y1="276" x2="246" y2="295" stroke="#17181c" stroke-width="6" stroke-linecap="round"/><line x1="257" y1="276" x2="256" y2="296" stroke="#17181c" stroke-width="6" stroke-linecap="round"/><line x1="268" y1="276" x2="269" y2="294" stroke="#17181c" stroke-width="6" stroke-linecap="round"/><line x1="281" y1="276" x2="280" y2="294" stroke="#17181c" stroke-width="6" stroke-linecap="round"/><line x1="293" y1="276" x2="294" y2="297" stroke="#17181c" stroke-width="6" stroke-linecap="round"/><line x1="305" y1="276" x2="304" y2="294" stroke="#17181c" stroke-width="6" stroke-linecap="round"/><line x1="317" y1="276" x2="318" y2="293" stroke="#17181c" stroke-width="6" stroke-linecap="round"/><line x1="332" y1="276" x2="330" y2="291" stroke="#54657f" stroke-width="7" stroke-linecap="round"/><line x1="343" y1="276" x2="344" y2="292" stroke="#17181c" stroke-width="6" stroke-linecap="round"/><line x1="355" y1="276" x2="353" y2="294" stroke="#17181c" stroke-width="6" stroke-linecap="round"/><line x1="365" y1="276" x2="367" y2="292" stroke="#17181c" stroke-width="6" stroke-linecap="round"/><line x1="373" y1="274" x2="371" y2="298" stroke="#17181c" stroke-width="8" stroke-linecap="round"/><line x1="386" y1="274" x2="388" y2="298" stroke="#17181c" stroke-width="8" stroke-linecap="round"/><line x1="401" y1="274" x2="398" y2="300" stroke="#17181c" stroke-width="8" stroke-linecap="round"/><line x1="415" y1="274" x2="420" y2="300" stroke="#17181c" stroke-width="8" stroke-linecap="round"/><line x1="441" y1="276" x2="439" y2="294" stroke="#3c413c" stroke-width="7" stroke-linecap="round"/><line x1="450" y1="276" x2="449" y2="294" stroke="#3c413c" stroke-width="7" stroke-linecap="round"/><line x1="462" y1="272" x2="459" y2="298" stroke="#4f6b96" stroke-width="8" stroke-linecap="round"/><line x1="472" y1="272" x2="484" y2="297" stroke="#5a78a6" stroke-width="8" stroke-linecap="round"/><line x1="496" y1="276" x2="495" y2="295" stroke="#17181c" stroke-width="8" stroke-linecap="round"/><line x1="510" y1="276" x2="511" y2="295" stroke="#17181c" stroke-width="8" stroke-linecap="round"/><ellipse cx="144" cy="298" rx="4.0" ry="2.6" fill="#e9e9ea"/><ellipse cx="154" cy="298" rx="4.0" ry="2.6" fill="#e9e9ea"/><ellipse cx="107" cy="304" rx="4.0" ry="2.6" fill="#e9e9ea"/><ellipse cx="90" cy="300" rx="4.0" ry="2.6" fill="#e9e9ea"/><ellipse cx="126" cy="296" rx="4.0" ry="2.6" fill="#e9e9ea"/><ellipse cx="137" cy="298" rx="4.0" ry="2.6" fill="#e9e9ea"/><ellipse cx="365" cy="294" rx="3.5" ry="2.6" fill="#c9a070"/><ellipse cx="62" cy="310" rx="5.0" ry="2.6" fill="#44597a"/><ellipse cx="72" cy="309" rx="5.0" ry="2.6" fill="#44597a"/><polygon points="37,222 57,209 60,213 40,227" fill="#c9a72f"/><line x1="77" y1="210" x2="86" y2="193" stroke="#c8ccd2" stroke-width="4" stroke-linecap="round"/><circle cx="86" cy="193" r="2.6" fill="#c9a58f"/><line x1="107" y1="210" x2="112" y2="192" stroke="#c8ccd2" stroke-width="4" stroke-linecap="round"/><circle cx="112" cy="192" r="2.6" fill="#c9a58f"/><line x1="117" y1="210" x2="122" y2="188" stroke="#c8ccd2" stroke-width="3.5" stroke-linecap="round"/><circle cx="122" cy="188" r="2.6" fill="#c9a58f"/><line x1="173" y1="222" x2="183" y2="206" stroke="#d5d6d8" stroke-width="4" stroke-linecap="round"/><circle cx="183" cy="206" r="2.6" fill="#c9a58f"/><line x1="165" y1="222" x2="131" y2="218" stroke="#15161a" stroke-width="5" stroke-linecap="round"/><circle cx="131" cy="218" r="2.6" fill="#c9a58f"/><line x1="139" y1="218" x2="181" y2="226" stroke="#15161a" stroke-width="5" stroke-linecap="round"/><circle cx="181" cy="226" r="2.6" fill="#c9a58f"/><line x1="185" y1="230" x2="203" y2="222" stroke="#b8bcc4" stroke-width="4" stroke-linecap="round"/><circle cx="203" cy="222" r="2.6" fill="#c9a58f"/><line x1="227" y1="210" x2="225" y2="188" stroke="#15161a" stroke-width="3.5" stroke-linecap="round"/><circle cx="225" cy="188" r="2.6" fill="#c9a58f"/><line x1="285" y1="212" x2="281" y2="192" stroke="#15161a" stroke-width="4" stroke-linecap="round"/><circle cx="281" cy="192" r="2.6" fill="#c9a58f"/><line x1="309" y1="202" x2="313" y2="182" stroke="#15161a" stroke-width="4" stroke-linecap="round"/><circle cx="313" cy="182" r="2.6" fill="#c9a58f"/><line x1="400" y1="210" x2="396" y2="178" stroke="#c9a58f" stroke-width="4.5" stroke-linecap="round"/><circle cx="396" cy="178" r="2.6" fill="#c9a58f"/><line x1="434" y1="206" x2="443" y2="180" stroke="#c9a58f" stroke-width="4.5" stroke-linecap="round"/><circle cx="443" cy="180" r="2.6" fill="#c9a58f"/><line x1="465" y1="204" x2="463" y2="180" stroke="#15161a" stroke-width="4" stroke-linecap="round"/><circle cx="463" cy="180" r="2.6" fill="#c9a58f"/><line x1="488" y1="196" x2="482" y2="169" stroke="#15161a" stroke-width="4.5" stroke-linecap="round"/><circle cx="482" cy="169" r="2.6" fill="#c9a58f"/><line x1="361" y1="210" x2="357" y2="190" stroke="#15161a" stroke-width="4" stroke-linecap="round"/><circle cx="357" cy="190" r="2.6" fill="#c9a58f"/><line x1="341" y1="210" x2="337" y2="188" stroke="#15161a" stroke-width="3.5" stroke-linecap="round"/><circle cx="337" cy="188" r="2.6" fill="#c9a58f"/><ellipse cx="90" cy="228" rx="3.8" ry="4.5" fill="#c9a58f"/><path d="M85.9,227.5 a4.0,4.5 0 0 1 8.1,0 q-4.0,-2.7 -8.1,0z" fill="#1b1a1a"/><ellipse cx="113" cy="211" rx="3.8" ry="4.5" fill="#c9a58f"/><path d="M108.9,210.5 a4.0,4.5 0 0 1 8.1,0 q-4.0,-2.7 -8.1,0z" fill="#1b1a1a"/><ellipse cx="123" cy="213" rx="3.8" ry="4.5" fill="#c9a58f"/><path d="M118.9,212.5 a4.0,4.5 0 0 1 8.1,0 q-4.0,-2.7 -8.1,0z" fill="#1b1a1a"/><ellipse cx="150" cy="197" rx="5.1" ry="6.0" fill="#c9a58f"/><path d="M144.6,196.5 a5.4,6.0 0 0 1 10.8,0 q-5.4,-3.6 -10.8,0z" fill="#1b1a1a"/><ellipse cx="199" cy="209" rx="4.7" ry="5.5" fill="#c9a58f"/><path d="M194.1,208.5 a5.0,5.5 0 0 1 9.9,0 q-5.0,-3.3 -9.9,0z" fill="#8a857f"/><ellipse cx="185" cy="217" rx="3.8" ry="4.5" fill="#c9a58f"/><path d="M180.9,216.5 a4.0,4.5 0 0 1 8.1,0 q-4.0,-2.7 -8.1,0z" fill="#1b1a1a"/><ellipse cx="224" cy="215" rx="4.7" ry="5.5" fill="#c9a58f"/><path d="M219.1,214.5 a5.0,5.5 0 0 1 9.9,0 q-5.0,-3.3 -9.9,0z" fill="#1b1a1a"/><ellipse cx="248" cy="215" rx="4.7" ry="5.5" fill="#c9a58f"/><path d="M243.1,214.5 a5.0,5.5 0 0 1 9.9,0 q-5.0,-3.3 -9.9,0z" fill="#1b1a1a"/><ellipse cx="255" cy="201" rx="4.2" ry="5.0" fill="#c9a58f"/><path d="M250.5,200.5 a4.5,5.0 0 0 1 9.0,0 q-4.5,-3.0 -9.0,0z" fill="#1b1a1a"/><ellipse cx="271" cy="219" rx="4.7" ry="5.5" fill="#c9a58f"/><path d="M266.1,218.5 a5.0,5.5 0 0 1 9.9,0 q-5.0,-3.3 -9.9,0z" fill="#1b1a1a"/><ellipse cx="284" cy="201" rx="4.2" ry="5.0" fill="#c9a58f"/><path d="M279.5,200.5 a4.5,5.0 0 0 1 9.0,0 q-4.5,-3.0 -9.0,0z" fill="#1b1a1a"/><ellipse cx="305" cy="196" rx="4.7" ry="5.5" fill="#c9a58f"/><path d="M300.1,195.5 a5.0,5.5 0 0 1 9.9,0 q-5.0,-3.3 -9.9,0z" fill="#1b1a1a"/><ellipse cx="324" cy="201" rx="4.7" ry="5.5" fill="#c9a58f"/><path d="M319.1,200.5 a5.0,5.5 0 0 1 9.9,0 q-5.0,-3.3 -9.9,0z" fill="#1b1a1a"/><ellipse cx="348" cy="223" rx="4.7" ry="5.5" fill="#c9a58f"/><path d="M343.1,222.5 a5.0,5.5 0 0 1 9.9,0 q-5.0,-3.3 -9.9,0z" fill="#b59660"/><ellipse cx="370" cy="197" rx="5.1" ry="6.0" fill="#c9a58f"/><path d="M364.6,196.5 a5.4,6.0 0 0 1 10.8,0 q-5.4,-3.6 -10.8,0z" fill="#1b1a1a"/><ellipse cx="378" cy="214" rx="5.1" ry="6.0" fill="#c9a58f"/><path d="M372.6,213.5 a5.4,6.0 0 0 1 10.8,0 q-5.4,-3.6 -10.8,0z" fill="#1b1a1a"/><ellipse cx="417" cy="205" rx="5.1" ry="6.0" fill="#c9a58f"/><path d="M411.6,204.5 a5.4,6.0 0 0 1 10.8,0 q-5.4,-3.6 -10.8,0z" fill="#1b1a1a"/><ellipse cx="420" cy="192" rx="4.2" ry="5.0" fill="#c9a58f"/><path d="M415.5,191.5 a4.5,5.0 0 0 1 9.0,0 q-4.5,-3.0 -9.0,0z" fill="#1b1a1a"/><ellipse cx="449" cy="202" rx="4.2" ry="5.0" fill="#c9a58f"/><path d="M444.5,201.5 a4.5,5.0 0 0 1 9.0,0 q-4.5,-3.0 -9.0,0z" fill="#1b1a1a"/><ellipse cx="456" cy="210" rx="5.1" ry="6.0" fill="#c9a58f"/><path d="M450.6,209.5 a5.4,6.0 0 0 1 10.8,0 q-5.4,-3.6 -10.8,0z" fill="#1b1a1a"/><ellipse cx="503" cy="194" rx="5.1" ry="6.0" fill="#c9a58f"/><path d="M497.6,193.5 a5.4,6.0 0 0 1 10.8,0 q-5.4,-3.6 -10.8,0z" fill="#1b1a1a"/><ellipse cx="293" cy="215" rx="3.8" ry="4.5" fill="#c9a58f"/><path d="M288.9,214.5 a4.0,4.5 0 0 1 8.1,0 q-4.0,-2.7 -8.1,0z" fill="#1b1a1a"/><ellipse cx="336" cy="212" rx="3.8" ry="4.5" fill="#c9a58f"/><path d="M331.9,211.5 a4.0,4.5 0 0 1 8.1,0 q-4.0,-2.7 -8.1,0z" fill="#1b1a1a"/><ellipse cx="391" cy="200" rx="3.8" ry="4.5" fill="#c9a58f"/><path d="M386.9,199.5 a4.0,4.5 0 0 1 8.1,0 q-4.0,-2.7 -8.1,0z" fill="#1b1a1a"/><path d="M86.5,236 l3.5,5.6 l3.5,-5.6" stroke="#cfa93a" stroke-width="2.6" fill="none"/><path d="M219.5,223 l4.5,7.2 l4.5,-7.2" stroke="#cfa93a" stroke-width="2.6" fill="none"/><path d="M325.0,210 l4.0,6.4 l4.0,-6.4" stroke="#cfa93a" stroke-width="2.6" fill="none"/><path d="M413.0,215 l5.0,8.0 l5.0,-8.0" stroke="#cfa93a" stroke-width="2.6" fill="none"/><path d="M450.5,218 l5.5,8.8 l5.5,-8.8" stroke="#cfa93a" stroke-width="2.6" fill="none"/><path d="M109.5,218 l3.5,5.6 l3.5,-5.6" stroke="#cfa93a" stroke-width="2.6" fill="none"/><path d="M482.0,216 l4.0,6.4 l4.0,-6.4" stroke="#cfa93a" stroke-width="2.6" fill="none"/><rect x="372" y="254" width="14" height="2.5" fill="#c8c8c8"/></g>
<g filter="url(#b05)"><rect x="75.0" y="0.0" width="14" height="16" rx="1.5" fill="#2b2f3c" transform="rotate(5 82 8)"/><rect x="203.0" y="1.0" width="14" height="10" rx="1.5" fill="#3a3d48" transform="rotate(-20 210 6)"/><rect x="368.5" y="0.5" width="13" height="9" rx="1.5" fill="#2e313d" transform="rotate(-5 375 5)"/><rect x="269.5" y="84.0" width="11" height="20" rx="1.5" fill="#1a1c24" transform="rotate(-25 275 94)"/><rect x="278.5" y="90.0" width="7" height="16" rx="1.5" fill="#1a1c24" transform="rotate(-10 282 98)"/><rect x="289.0" y="83.0" width="14" height="14" rx="1.5" fill="#1c1e26" transform="rotate(3 296 90)"/><rect x="145.5" y="96.0" width="13" height="12" rx="1.5" fill="#1a1c24" transform="rotate(30 152 102)"/><rect x="152.5" y="106.0" width="15" height="12" rx="1.5" fill="#1a1c24" transform="rotate(-15 160 112)"/><rect x="198.5" y="115.0" width="9" height="20" rx="1.5" fill="#1e2028" transform="rotate(15 203 125)"/><rect x="120.5" y="125.5" width="13" height="13" rx="1.5" fill="#1a1c24" transform="rotate(-30 127 132)"/><rect x="91.5" y="134.5" width="15" height="9" rx="1.5" fill="#1a1c24" transform="rotate(20 99 139)"/><rect x="79.5" y="136.5" width="15" height="15" rx="1.5" fill="#1a1c24" transform="rotate(30 87 144)"/><rect x="381.5" y="86.5" width="10" height="11" rx="1.5" fill="#20222a" transform="rotate(25 386.5 92)"/><rect x="330.5" y="95.5" width="15" height="17" rx="1.5" fill="#1a1c24" transform="rotate(-20 338 104)"/><rect x="370.0" y="104.0" width="10" height="10" rx="1.5" fill="#20222a" transform="rotate(-35 375 109)"/><rect x="490.0" y="64.0" width="16" height="16" rx="1.5" fill="#1a1c24" transform="rotate(-12 498 72)"/><rect x="479.5" y="97.5" width="15" height="17" rx="1.5" fill="#1a1c24" transform="rotate(-25 487 106)"/><rect x="426.5" y="110.5" width="15" height="13" rx="1.5" fill="#1a1c24" transform="rotate(25 434 117)"/><rect x="446.0" y="119.0" width="12" height="10" rx="1.5" fill="#22242c" transform="rotate(30 452 124)"/><rect x="305.5" y="138.5" width="17" height="19" rx="1.5" fill="#2f3d33" transform="rotate(-25 314 148)"/><rect x="289.5" y="158.5" width="13" height="11" rx="1.5" fill="#253028" transform="rotate(5 296 164)"/><rect x="216.5" y="174.5" width="15" height="11" rx="1.5" fill="#15171c" transform="rotate(0 224 180)"/><rect x="121.0" y="170.0" width="8" height="10" rx="1.5" fill="#20242a" transform="rotate(-15 125 175)"/><line x1="59" y1="6" x2="65" y2="11" stroke="#555a66" stroke-width="1"/><line x1="504" y1="80" x2="508" y2="88" stroke="#555a66" stroke-width="1"/><line x1="203" y1="138" x2="204" y2="146" stroke="#555a66" stroke-width="1"/><line x1="165" y1="122" x2="166" y2="128" stroke="#555a66" stroke-width="1"/><line x1="133" y1="140" x2="134" y2="147" stroke="#555a66" stroke-width="1"/><line x1="494" y1="118" x2="489" y2="114" stroke="#555a66" stroke-width="1"/></g>
</g></svg>
<!-- gray bar under photo (slide-local coords: page y - 219) -->
<div class="abs" style="left:0;top:452.5px;width:230px;height:9px;background:linear-gradient(90deg,#a6a6a7 0,#a9a9aa 55%,#c9c8c6 80%,rgba(229,226,222,0) 100%);filter:blur(.5px)"></div>
<div class="abs" style="left:200px;top:457.5px;width:450px;height:1px;background:#c9c3c2"></div>
<!-- building sketch -->
<svg class="abs" style="left:0;top:370px;filter:blur(.5px)" width="49" height="84" viewBox="0 0 49 84" fill="none" stroke="#9b9b9d" stroke-width="1.6">
<path d="M28 12q6-6 4 6M36 8q8 2 12 8" stroke-width="1.4"/>
<path d="M34 24h12M33 30h13M16 38h30M16 44h10M32 44h14M17 50h29M17 56h10M33 56h13M17 62h29M17 68h10M34 68h12M18 74h28M12 80h34" />
<path d="M9 36v40M13 40v34" stroke="#a9a9ab" stroke-width="2.2" stroke-dasharray="3 1.5"/>
<path d="M1 52v24" stroke="#8f8f92" stroke-width="2"/>
<path d="M30 38v40M46 22v58" stroke="#b5b5b7" stroke-width="1"/>
</svg>
<!-- motto -->
<div class="t" style="left:650px;top:447.5px;font-family:'Liberation Serif','Noto Serif CJK SC',serif;font-style:italic;font-weight:700;font-size:11.5px;color:#9c1c24;letter-spacing:1.1px;filter:blur(.35px)">厚德载物&nbsp;经世致用</div>
<div class="abs" style="left:648px;top:458.5px;width:106px;height:1.2px;background:#b0404a"></div>
<div class="t" style="left:660px;top:459px;font-family:'Liberation Serif',serif;font-size:14.1px;color:#9a9896;letter-spacing:-.15px;filter:blur(.4px)">suihuauniversity</div>
</div>
  <div class="abs" style="left:779px;top:183px;width:11px;height:576px;background:#f2f2f4;border-left:1px solid #e9e9ec"></div>
<div class="abs" style="left:780.5px;top:640px;width:7.5px;height:36px;border-radius:2px;background:#d2d3d6"></div>
<svg class="ic" style="left:782px;top:190.8px" width="4" height="3" viewBox="0 0 4 3"><path d="M0 0h4L2 2.6z" fill="#b8b8bc"/></svg>
<svg class="ic" style="left:782px;top:695.8px" width="4" height="3" viewBox="0 0 4 3"><path d="M0 0h4L2 2.6z" fill="#8a8a8e"/></svg>
<svg class="ic" style="left:782px;top:707px" width="4" height="6" viewBox="0 0 4 6"><path d="M0 3 2 .6 4 3zM0 3.4h4L2 5.8z" fill="#8a8a8e"/></svg>
<svg class="ic" style="left:782px;top:719px" width="4" height="6" viewBox="0 0 4 6"><path d="M0 3 2 .6 4 3zM0 3.4h4L2 5.8z" fill="#8a8a8e"/></svg>
  <div id="side" class="abs"></div>
  <div id="iconstrip" class="abs"></div>
  <div id="status" class="abs"></div>
  <div id="taskbar" class="abs"></div>
  <div class="t soft r8" style="left:795px;top:189.7px;letter-spacing:-.2px;color:#444">稻壳智能特性</div>
<svg class="ic" style="left:845px;top:191.8px" width="4" height="3" viewBox="0 0 4 3"><path d="M0 0h4L2 2.6z" fill="#777"/></svg>
<svg class="ic soft" style="left:915.5px;top:187.5px" width="11" height="11" viewBox="0 0 11 11" fill="none" stroke="#666" stroke-width="1" stroke-linecap="round" stroke-linejoin="round" ><path d="M5.5 .8 9.6 3.1v4.8L5.5 10.2 1.4 7.9V3.1z"/><circle cx="5.5" cy="5.5" r="1.7"/></svg>
<svg class="ic soft" style="left:932px;top:188px" width="10" height="10" viewBox="0 0 10 10" fill="none" stroke="#666" stroke-width="1" stroke-linecap="round" stroke-linejoin="round" ><path d="M2 7.2c.8-.8.8-1.6.8-3a2.2 2.2 0 0 1 4.4 0c0 1.4 0 2.2.8 3z"/><path d="M5 7.4v2M5 1.8V.8"/></svg>
<svg class="ic soft" style="left:949px;top:189px" width="8" height="8" viewBox="0 0 8 8" fill="none" stroke="#666" stroke-width="1.1" stroke-linecap="round" stroke-linejoin="round" ><path d="M.8 .8l6.4 6.4M7.2 .8.8 7.2"/></svg>
<div class="t soft r8" style="left:805px;top:211.8px;color:#444">缺失字体</div>
<div class="t soft r8" style="left:853px;top:211.8px;color:#e4573d">文字处理</div>
<div class="t soft r8" style="left:901px;top:211.8px;color:#444">表格处理</div>
<svg class="ic soft" style="left:944px;top:211.5px" width="8" height="7" viewBox="0 0 8 7" fill="none" stroke="#777" stroke-width="1" stroke-linecap="round" stroke-linejoin="round" ><path d="M.6 .8h6.8M.6 3.5h6.8M.6 6.2h6.8"/></svg>
<div class="abs" style="left:846px;top:225.5px;width:47px;height:1.6px;background:#e4573d"></div>
<svg class="ic" style="left:801.5px;top:243.0px" width="3" height="4" viewBox="0 0 3 4"><path d="M0 0 2.8 2 0 4z" fill="#555"/></svg>
<div class="t soft r8" style="left:810.5px;top:240.4px;color:#444">项目符号</div>
<svg class="ic" style="left:801.5px;top:271.2px" width="3" height="4" viewBox="0 0 3 4"><path d="M0 0 2.8 2 0 4z" fill="#555"/></svg>
<div class="t soft r8" style="left:810.5px;top:268.6px;color:#444">换字体</div>
<svg class="ic" style="left:801.5px;top:299.0px" width="3" height="4" viewBox="0 0 3 4"><path d="M0 0 2.8 2 0 4z" fill="#555"/></svg>
<div class="t soft r8" style="left:810.5px;top:296.4px;color:#444">换文字效果</div>
<svg class="ic" style="left:801.5px;top:327.0px" width="3" height="4" viewBox="0 0 3 4"><path d="M0 0 2.8 2 0 4z" fill="#555"/></svg>
<div class="t soft r8" style="left:810.5px;top:324.4px;color:#444">文本框</div>
<div class="abs" style="left:967.5px;top:346px;width:19px;height:20px;border-radius:2px;background:#e3e4e8"></div>
<svg class="ic soft" style="left:970.5px;top:205.5px" width="13" height="13" viewBox="0 0 13 13" fill="none" stroke="#60626a" stroke-width="1.05" stroke-linecap="round" stroke-linejoin="round" ><path d="M3.2 9.6 2 12l2.6-.8"/><path d="M3 9.4C3 5.6 6 2.4 11 2c.4 4.6-2.6 8-6.2 8.4z"/><circle cx="7.6" cy="5.8" r="1.2"/></svg>
<svg class="ic soft" style="left:970.5px;top:229.2px" width="13" height="13" viewBox="0 0 13 13" fill="none" stroke="#60626a" stroke-width="1.05" stroke-linecap="round" stroke-linejoin="round" ><path d="M1.4 4h10.2M1.4 9.6h10.2"/><circle cx="4.4" cy="4" r="1.5" fill="#f7f7f8"/><circle cx="8.8" cy="9.6" r="1.5" fill="#f7f7f8"/></svg>
<svg class="ic soft" style="left:970.5px;top:253.5px" width="13" height="13" viewBox="0 0 13 13" fill="none" stroke="#60626a" stroke-width="1.05" stroke-linecap="round" stroke-linejoin="round" ><path d="M6.5 1.4 8 4.8l3.6.4-2.7 2.4.8 3.6-3.2-1.9-3.2 1.9.8-3.6L1.4 5.2 5 4.8z"/></svg>
<svg class="ic soft" style="left:970.5px;top:277.5px" width="13" height="13" viewBox="0 0 13 13" fill="none" stroke="#60626a" stroke-width="1.05" stroke-linecap="round" stroke-linejoin="round" ><rect x="3.6" y="1.4" width="8" height="6.4" rx="1"/><path d="M1.6 4v6.2h7"/><path d="M3.4 8.6 1.6 10.4l1.8 1.6"/></svg>
<svg class="ic soft" style="left:970.5px;top:302.0px" width="13" height="13" viewBox="0 0 13 13" fill="none" stroke="#60626a" stroke-width="1.05" stroke-linecap="round" stroke-linejoin="round" ><circle cx="6.5" cy="6.5" r="5"/><path d="M6.5 6.8V4M6.5 6.8l2-1.4"/></svg>
<svg class="ic soft" style="left:970.5px;top:326.1px" width="13" height="13" viewBox="0 0 13 13" fill="none" stroke="#60626a" stroke-width="1.05" stroke-linecap="round" stroke-linejoin="round" ><rect x="1.4" y="2" width="10" height="8.6" rx="1.2"/><path d="M1.6 5.2h9.6"/><circle cx="8.8" cy="9" r="2.2" fill="#f7f7f8"/><path d="M7.8 9l.8.8 1.2-1.4"/></svg>
<svg class="ic soft" style="left:970.5px;top:349.5px" width="13" height="13" viewBox="0 0 13 13" fill="none" stroke="#60626a" stroke-width="1.05" stroke-linecap="round" stroke-linejoin="round" ><path d="M6.5 12C3.6 9.4 2.2 7.4 2.2 5.4a4.3 4.3 0 0 1 8.6 0c0 2-1.4 4-4.3 6.6z"/><circle cx="6.5" cy="5.4" r="1.6"/></svg>
<svg class="ic soft" style="left:970.5px;top:373.5px" width="13" height="13" viewBox="0 0 13 13" fill="none" stroke="#60626a" stroke-width="1.05" stroke-linecap="round" stroke-linejoin="round" ><rect x="1.2" y="2.2" width="6.6" height="8.4" rx="1"/><path d="M7.8 3.4h3.6v7.2H7.8"/><path d="M9 5.4l1.4.8L9 7z"/></svg>
<div class="abs" style="left:972.6px;top:746.4px;width:2.2px;height:2.2px;border-radius:50%;background:#70727a"></div>
<div class="abs" style="left:976.1px;top:746.4px;width:2.2px;height:2.2px;border-radius:50%;background:#70727a"></div>
<div class="abs" style="left:979.6px;top:746.4px;width:2.2px;height:2.2px;border-radius:50%;background:#70727a"></div>
  <svg class="ic soft" style="left:544px;top:766.5px" width="10" height="10" viewBox="0 0 10 10" fill="none" stroke="#666" stroke-width="1" stroke-linecap="round" stroke-linejoin="round" ><path d="M5 .8 9 3v4.4L5 9.4 1 7.4V3z"/><path d="M1.2 3.1 5 5.2l3.8-2.1M5 5.2v4"/></svg>
<div class="t soft r8" style="left:558px;top:767.7px;color:#7a7a7e">智能美化</div>
<svg class="ic" style="left:596px;top:771.1px" width="4" height="3" viewBox="0 0 4 3"><path d="M0 0h4L2 2.6z" fill="#777"/></svg>
<svg class="ic soft" style="left:616.5px;top:767.5px" width="12" height="8" viewBox="0 0 12 8" fill="none" stroke="#555" stroke-width="1" stroke-linecap="round" stroke-linejoin="round" ><path d="M.6 .8h10.8M.6 4h10.8M.6 7.2h10.8"/></svg>
<div class="t soft r8" style="left:630px;top:767.7px;color:#444">备注</div>
<svg class="ic" style="left:648.5px;top:771.1px" width="4" height="3" viewBox="0 0 4 3"><path d="M0 0h4L2 2.6z" fill="#777"/></svg>
<svg class="ic soft" style="left:657px;top:766.5px" width="12" height="10" viewBox="0 0 12 10" fill="none" stroke="#555" stroke-width="1" stroke-linecap="round" stroke-linejoin="round" ><path d="M7 1.2H1.6v6.4h1.6v1.8l2-1.8h4.6V4.4"/><path d="M9.8 .6v3M8.3 2.1h3"/></svg>
<div class="t soft r8" style="left:671.5px;top:767.7px;color:#444">批注</div>
<div class="abs" style="left:704px;top:764px;width:14.5px;height:15px;background:#dddee2;border-radius:1.5px"></div>
<svg class="ic soft" style="left:706px;top:767px" width="11" height="9" viewBox="0 0 11 9" fill="none" stroke="#50525a" stroke-width="1" stroke-linecap="round" stroke-linejoin="round" ><rect x=".6" y=".6" width="9.8" height="7.8"/><path d="M3.6 .8v7.6M3.6 5.6h6.6"/></svg>
<svg class="ic soft" style="left:723px;top:767px" width="11" height="9" viewBox="0 0 11 9" fill="none" stroke="#60626a" stroke-width="1" stroke-linecap="round" stroke-linejoin="round" ><rect x=".6" y=".6" width="3.8" height="3"/><rect x="6.4" y=".6" width="3.8" height="3"/><rect x=".6" y="5.4" width="3.8" height="3"/><rect x="6.4" y="5.4" width="3.8" height="3"/></svg>
<svg class="ic soft" style="left:740px;top:767px" width="11" height="9" viewBox="0 0 11 9" fill="none" stroke="#60626a" stroke-width="1" stroke-linecap="round" stroke-linejoin="round" ><path d="M5.5 1.6C4.4 .8 2.6.6.8 1v7c1.8-.4 3.6-.2 4.7.6 1.1-.8 2.9-1 4.7-.6V1C8.4.6 6.600000000000001.8 5.5 1.6zM5.5 1.8v6.6"/></svg>
<div class="abs soft" style="left:768px;top:764px;width:20.5px;height:15.5px;background:#5e6375;border-radius:1px"></div>
<svg class="ic" style="left:774.5px;top:767.2px" width="8" height="9" viewBox="0 0 8 9"><path d="M.6 .4 7.4 4.5.6 8.600000000000001z" fill="#fff"/></svg>
<svg class="ic" style="left:791.5px;top:771.1px" width="4" height="3" viewBox="0 0 4 3"><path d="M0 0h4L2 2.6z" fill="#777"/></svg>
<svg class="ic soft" style="left:812px;top:766.5px" width="11" height="10" viewBox="0 0 11 10" fill="none" stroke="#60626a" stroke-width="1" stroke-linecap="round" stroke-linejoin="round" ><path d="M.8 3V.8h2.4M7.800000000000001.8h2.4V3M10.2 7v2.2H7.800000000000001M3.2 9.2H.8V7"/><rect x="3.2" y="2.8" width="4.6" height="4.4"/></svg>
<div class="t soft r8" style="left:828.5px;top:767.7px;color:#444;font-size:8.4px">99%</div>
<svg class="ic" style="left:847px;top:771.1px" width="4" height="3" viewBox="0 0 4 3"><path d="M0 0h4L2 2.6z" fill="#777"/></svg>
<svg class="ic soft" style="left:858px;top:770.6px" width="8" height="2" viewBox="0 0 8 2" fill="none" stroke="#444" stroke-width="1.2" stroke-linecap="round" stroke-linejoin="round" ><path d="M.6 1h6.8"/></svg>
<div class="abs" style="left:874px;top:771.2px;width:42px;height:1px;background:#8a8c92"></div>
<div class="abs" style="left:914.5px;top:767.7px;width:8px;height:8px;border-radius:50%;background:#fff;border:1.1px solid #6a6c72"></div>
<svg class="ic soft" style="left:973.5px;top:767.5px" width="8" height="8" viewBox="0 0 8 8" fill="none" stroke="#333" stroke-width="1.3" stroke-linecap="round" stroke-linejoin="round" ><path d="M4 .6v6.8M.6 4h6.8"/></svg>
  <svg class="ic soft" style="left:220.5px;top:791.5px" width="16" height="16" viewBox="0 0 16 16"><defs><linearGradient id="wl" x1="0" y1="0" x2="1" y2="1"><stop offset="0" stop-color="#5fd0f6"/><stop offset="1" stop-color="#1f8fe0"/></linearGradient></defs><rect x="0" y="0" width="7.4" height="7.4" rx=".6" fill="url(#wl)"/><rect x="8.6" y="0" width="7.4" height="7.4" rx=".6" fill="url(#wl)"/><rect x="0" y="8.6" width="7.4" height="7.4" rx=".6" fill="url(#wl)"/><rect x="8.6" y="8.6" width="7.4" height="7.4" rx=".6" fill="url(#wl)"/></svg>
<div class="abs" style="left:248px;top:788px;width:63px;height:22px;border-radius:11px;background:#2a2b30"></div>
<svg class="ic soft" style="left:264px;top:794.5px" width="10" height="10" viewBox="0 0 10 10" fill="none" stroke="#f0f0f0" stroke-width="1.4" stroke-linecap="round" stroke-linejoin="round" ><circle cx="5.800000000000001" cy="4.2" r="3.2"/><path d="M3.4 6.6 1 9"/></svg>
<div class="t soft r8" style="left:277.5px;top:794.9px;color:#f2f2f2;font-weight:700">搜索</div>
<div class="abs soft" style="left:320px;top:795px;width:12px;height:11px;background:#8f939c;border-radius:1px"></div><div class="abs soft" style="left:325px;top:791.5px;width:13px;height:11px;background:#e8eaee;border-radius:1px"></div>
<svg class="ic soft" style="left:350px;top:791px" width="17" height="16" viewBox="0 0 17 16"><path d="M.5 2.200000000000001a1 1 0 0 1 1-1h4.2l1.6 1.6h8.2a1 1 0 0 1 1 1V13a1 1 0 0 1-1 1H1.5a1 1 0 0 1-1-1z" fill="#e9a92c"/><path d="M.5 5.4h16V13a1 1 0 0 1-1 1H1.5a1 1 0 0 1-1-1z" fill="#fbd560"/><rect x="3.6" y="10.8" width="9.8" height="3.2" fill="#4a93dc"/></svg>
<svg class="ic soft" style="left:380px;top:791px" width="16" height="17" viewBox="0 0 16 17"><rect x=".5" y=".5" width="15" height="16" rx="3" fill="#1a7be6"/><path d="M5 3.4 11.4 9.8 8.4 10.2 9.6 13.4 8 14 6.8 10.8 5 12.4z" fill="#fff"/></svg>
<svg class="ic soft" style="left:408.5px;top:791px" width="17" height="17" viewBox="0 0 17 17"><rect x=".5" y=".5" width="16" height="16" rx="3" fill="#f08a24"/><circle cx="8" cy="7.6" r="3.6" fill="#ffe7c4"/><circle cx="8" cy="7.6" r="1.6" fill="#f08a24"/><circle cx="13" cy="13" r="2.6" fill="#fff"/></svg>
<svg class="ic soft" style="left:437.5px;top:791px" width="18" height="17" viewBox="0 0 18 17"><path d="M1.6 2.4 5.4 14 9 6.4 12.6 14 16.4 2.4" stroke="#fff" stroke-width="4.2" fill="none" stroke-linejoin="round" opacity=".9"/><path d="M1.6 2.4 5.4 14 9 6.4 12.6 14 16.4 2.4" stroke="#e0222c" stroke-width="2.8" fill="none" stroke-linejoin="round"/></svg>
<div class="abs" style="left:462.5px;top:785.5px;width:28px;height:27px;border-radius:3px;background:#2f3035"></div>
<svg class="ic soft" style="left:467px;top:791.5px" width="18" height="16" viewBox="0 0 18 16"><ellipse cx="7" cy="6" rx="6.4" ry="5.4" fill="#2cc35e"/><path d="M3 10.200000000000001 2.2 13l3-1.6z" fill="#2cc35e"/><ellipse cx="12" cy="10" rx="5.2" ry="4.4" fill="#e9ecec"/><path d="M15 13.4l.8 2-2.6-1.2z" fill="#e9ecec"/></svg>
<div class="abs" style="left:357px;top:810px;width:4px;height:1.6px;border-radius:1px;background:#8a8e96"></div>
<div class="abs" style="left:387px;top:810px;width:3px;height:1.6px;border-radius:1px;background:#8a8e96"></div>
<div class="abs" style="left:416px;top:810px;width:3px;height:1.6px;border-radius:1px;background:#8a8e96"></div>
<div class="abs" style="left:445.5px;top:810px;width:3px;height:1.6px;border-radius:1px;background:#8a8e96"></div>
<div class="abs" style="left:470px;top:810px;width:10px;height:1.6px;border-radius:1px;background:#9fc6f0"></div>
<svg class="ic soft" style="left:821.5px;top:797.5px" width="9" height="6" viewBox="0 0 9 6" fill="none" stroke="#eee" stroke-width="1.2" stroke-linecap="round" stroke-linejoin="round" ><path d="M.8 5 4.5 1.2 8.2 5"/></svg>
<svg class="ic soft" style="left:835.5px;top:794px" width="13" height="11" viewBox="0 0 13 11"><ellipse cx="5" cy="4.2" rx="4.6" ry="3.8" fill="#2cc35e"/><ellipse cx="8.8" cy="7" rx="3.8" ry="3.2" fill="#dfe6e2"/></svg>
<div class="t soft r8" style="left:854.5px;top:794.9px;color:#f4f4f4;font-size:11.5px;top:793.5px">英</div>
<svg class="ic soft" style="left:875.5px;top:794.5px" width="12" height="10" viewBox="0 0 12 10" fill="none" stroke="#eee" stroke-width="1.1" stroke-linecap="round" stroke-linejoin="round" ><path d="M1 3.6a7.2 7.2 0 0 1 10 0M2.8 5.6a4.6 4.6 0 0 1 6.4 0M4.6 7.4a2 2 0 0 1 2.8 0"/><circle cx="6" cy="8.8" r=".5" fill="#eee"/></svg>
<svg class="ic soft" style="left:892px;top:794.5px" width="12" height="10" viewBox="0 0 12 10" fill="none" stroke="#eee" stroke-width="1" stroke-linecap="round" stroke-linejoin="round" ><path d="M.8 3.6h2L5.4 1.2v7.6L2.8 6.4h-2z"/><path d="M7.2 3.4a2.4 2.4 0 0 1 0 3.2M8.8 2a4.4 4.4 0 0 1 0 6"/></svg>
<svg class="ic soft" style="left:908px;top:795px" width="13" height="9" viewBox="0 0 13 9" fill="none" stroke="#eee" stroke-width="1" stroke-linecap="round" stroke-linejoin="round" ><rect x="2.6" y="1.4" width="8.6" height="6.2" rx="1.6"/><path d="M12.4 3.4v2.200000000000001"/><path d="M1 0v6M.2 1.2 1 0l.8 1.2" stroke-width=".9"/><rect x="4" y="2.8" width="3.6" height="3.4" fill="#eee" stroke="none"/></svg>
<div class="t soft" style="left:925px;top:790px;width:38px;text-align:right;font-size:8.2px;font-weight:700;color:#f0f0f0">3:03</div>
<div class="t soft" style="left:925px;top:800.3px;width:38px;text-align:right;font-size:8.2px;font-weight:700;color:#f0f0f0">2023/1/4</div>
<div class="abs soft" style="left:968px;top:793.5px;width:11px;height:11px;border-radius:50%;background:#c9cbd0;color:#222;font-size:7px;line-height:11px;text-align:center">1</div>
</div>
<div class="redh" style="left:0;top:94px;width:993px"></div>
<div class="redh" style="left:0;top:814px;width:993px"></div>
<div class="redv" style="left:992px;top:94px;height:721px"></div>
<!-- ===== live chrome: top band ===== -->
<div class="t soft" style="left:363px;top:12px;font-size:10.5px;color:#dcdcdc;letter-spacing:-.2px">绥化学院__</div>
<svg class="abs" style="left:413.5px;top:6px" width="12" height="12" viewBox="0 0 12 12"><rect x="1" y="7" width="1.6" height="3" fill="#19a15f"/><rect x="4" y="4.5" width="1.6" height="5.5" fill="#19a15f"/><rect x="7" y="2" width="1.6" height="8" fill="#19a15f"/><rect x="4.5" y="11" width="1" height="1" fill="#5a8a6a"/></svg>
<div class="t soft" style="left:430px;top:6px;font-size:10.5px;color:#dcdcdc">00:02:48</div>
<div class="abs" style="left:475px;top:7px;width:1px;height:9px;background:#4a4b4f"></div>
<div class="t soft" style="left:481px;top:6px;font-size:10.5px;color:#e4e4e4;letter-spacing:-.3px">直播中</div>
<!-- toolbar left icons -->
<svg class="abs soft" style="left:6px;top:44px" width="22" height="22" viewBox="0 0 22 22" fill="none" stroke="#e6e6e6" stroke-width="1.8" stroke-linecap="round" stroke-linejoin="round"><circle cx="11.5" cy="6.5" r="3.6"/><path d="M2.5 19c.2-4 1.6-6.4 4.3-7.6"/><path d="M13.5 12.8c-3-.6-5.2 1-5.2 3.2 0 2 1.6 3 3.6 3"/><path d="M16.2 13.2v6M13.2 16.2h6"/></svg>
<div class="t soft" style="left:-1px;top:70px;font-size:10.5px;color:#dadada;letter-spacing:-.2px">加直播群</div>
<svg class="abs soft" style="left:69px;top:44px" width="22" height="22" viewBox="0 0 22 22" fill="none" stroke="#e6e6e6" stroke-width="1.9" stroke-linecap="round" stroke-linejoin="round"><path d="M9 4.5H5.2a2 2 0 0 0-2 2v9.8a2 2 0 0 0 2 2H15a2 2 0 0 0 2-2v-3.8"/><path d="M12.5 3h5.8v5.8M18 3.3 9.8 11.5"/></svg>
<div class="t soft" style="left:69px;top:70px;font-size:10.5px;color:#dadada">分享</div>
<!-- buttons -->
<div class="btn soft" style="left:876px;top:48px;width:62px;height:30px;border:1px solid #2f3034;background:#1b1c1f;color:#efefef;line-height:30px;font-weight:500">暂停</div>
<div class="btn soft" style="left:946px;top:48px;width:87px;height:31px;background:#f1622e;color:#ffe2d4;line-height:33px;border-radius:4px;font-weight:500">结束直播</div>
<!-- chat panel -->
<div class="t soft" style="left:1062px;top:99px;font-size:10.5px;color:#e6e6e6">聊天</div>
<div class="abs" style="left:1047px;top:121.5px;width:33px;height:1.5px;background:#3a78d8"></div>
<div class="t soft" style="left:1063px;top:137px;font-size:10.5px;color:#e29b1f">该直</div>
<div class="abs" style="left:1054px;top:800px;width:32px;height:18px;border-radius:9px;background:#2b2c30"></div>
<div class="abs" style="left:1056.5px;top:802.5px;width:13px;height:13px;border-radius:50%;background:radial-gradient(circle,#f9d468 0,#f6c24a 40%,#eda22a 75%,#c97f1c 100%)"></div>
<div class="t soft" style="left:1072px;top:804px;font-size:10px;color:#d8d8d8">签到</div>
<div class="t soft" style="left:1057px;top:834.5px;font-size:11px;color:#5a5b5f">请输入</div>
<!-- red selection handles -->
<div class="abs hd" style="left:347px;top:92px"></div>
<div class="abs hd" style="left:347px;top:811px"></div>
<div class="abs hd" style="left:989px;top:452px"></div>
<div class="abs hd" style="left:989px;top:93px;width:4px;height:4px"></div>
<div class="abs hd" style="left:989px;top:811px;width:4px;height:4px"></div>

</body>
</html>
